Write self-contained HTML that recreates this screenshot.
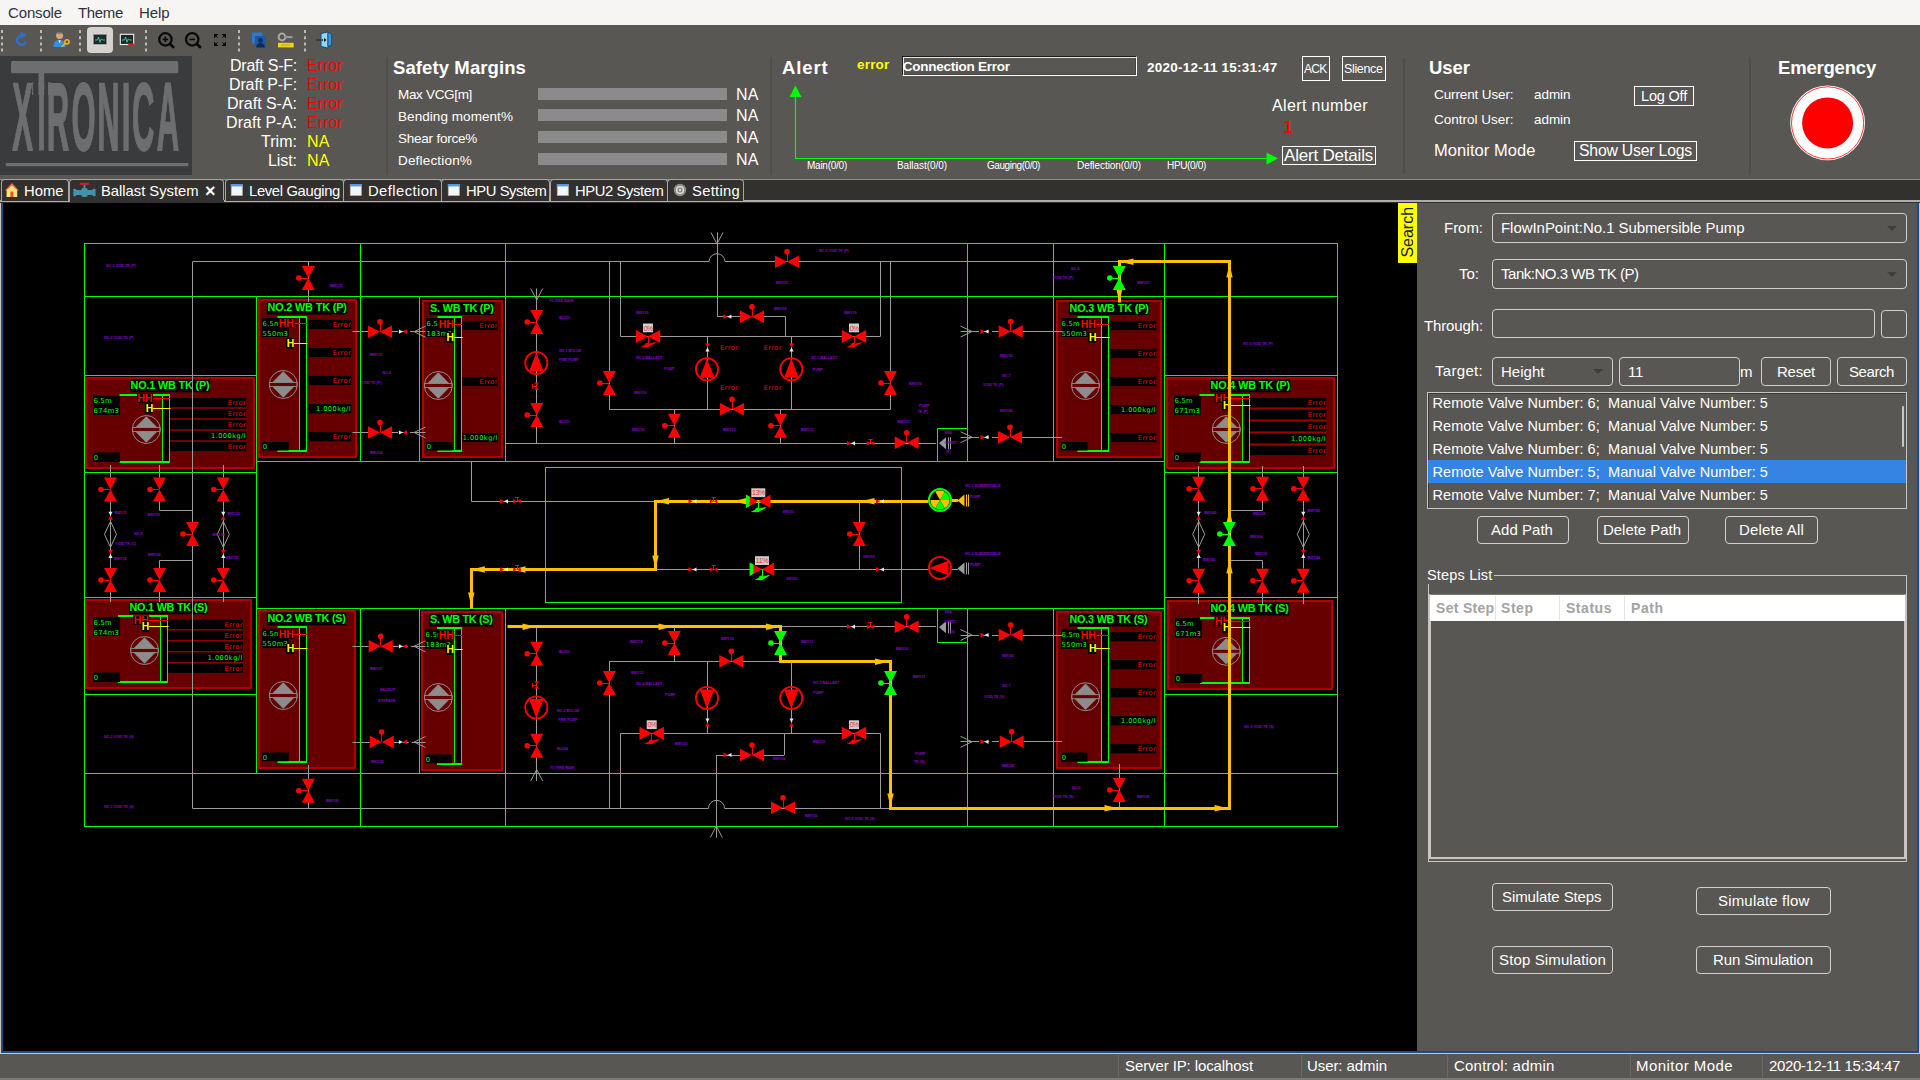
<!DOCTYPE html>
<html lang="en"><head><meta charset="utf-8"><title>Ballast System</title>
<style>
html,body{margin:0;padding:0;background:#595753;}
body{width:1920px;height:1080px;position:relative;overflow:hidden;font-family:"Liberation Sans",sans-serif;}
.t{position:absolute;white-space:pre;margin:0;padding:0;}
.b{position:absolute;box-sizing:border-box;}
svg{position:absolute;left:0;top:0;}
svg text{font-family:"Liberation Sans",sans-serif;white-space:pre;}
svg text.dv{font-family:"DejaVu Sans","Liberation Sans",sans-serif;}
</style></head>
<body>
<div class="b" style="left:0px;top:0px;width:1920px;height:25px;background:#f6f5f4;"></div>
<span class="t" style="left:8.00px;top:3.50px;font-size:15px;line-height:18px;font-weight:400;color:#2e3436;letter-spacing:-0.148px;">Console</span>
<span class="t" style="left:78.00px;top:3.50px;font-size:15px;line-height:18px;font-weight:400;color:#2e3436;letter-spacing:-0.337px;">Theme</span>
<span class="t" style="left:139.00px;top:3.50px;font-size:15px;line-height:18px;font-weight:400;color:#2e3436;letter-spacing:-0.088px;">Help</span>
<div class="b" style="left:0px;top:56px;width:192px;height:119px;background:#3a3b3d;"></div>
<span class="t" style="left:230.00px;top:55.50px;font-size:16px;line-height:19px;font-weight:400;color:#fff;letter-spacing:-0.234px;">Draft S-F:</span>
<span class="t" style="left:307.00px;top:55.50px;font-size:16px;line-height:19px;font-weight:400;color:#ff0000;letter-spacing:0.089px;">Error</span>
<span class="t" style="left:229.00px;top:74.50px;font-size:16px;line-height:19px;font-weight:400;color:#fff;letter-spacing:-0.134px;">Draft P-F:</span>
<span class="t" style="left:307.00px;top:74.50px;font-size:16px;line-height:19px;font-weight:400;color:#ff0000;letter-spacing:0.089px;">Error</span>
<span class="t" style="left:227.00px;top:93.50px;font-size:16px;line-height:19px;font-weight:400;color:#fff;letter-spacing:-0.024px;">Draft S-A:</span>
<span class="t" style="left:307.00px;top:93.50px;font-size:16px;line-height:19px;font-weight:400;color:#ff0000;letter-spacing:0.089px;">Error</span>
<span class="t" style="left:226.00px;top:112.50px;font-size:16px;line-height:19px;font-weight:400;color:#fff;letter-spacing:0.076px;">Draft P-A:</span>
<span class="t" style="left:307.00px;top:112.50px;font-size:16px;line-height:19px;font-weight:400;color:#ff0000;letter-spacing:0.089px;">Error</span>
<span class="t" style="left:261.00px;top:131.50px;font-size:16px;line-height:19px;font-weight:400;color:#fff;letter-spacing:0.033px;">Trim:</span>
<span class="t" style="left:307.00px;top:131.50px;font-size:16px;line-height:19px;font-weight:400;color:#ffff00;letter-spacing:0.136px;">NA</span>
<span class="t" style="left:268.00px;top:150.50px;font-size:16px;line-height:19px;font-weight:400;color:#fff;letter-spacing:-0.069px;">List:</span>
<span class="t" style="left:307.00px;top:150.50px;font-size:16px;line-height:19px;font-weight:400;color:#ffff00;letter-spacing:0.136px;">NA</span>
<div class="b" style="left:386px;top:57px;width:2px;height:118px;background:#504e4a;"></div>
<div class="b" style="left:770px;top:57px;width:2px;height:118px;background:#504e4a;"></div>
<div class="b" style="left:1403px;top:57px;width:2px;height:118px;background:#504e4a;"></div>
<div class="b" style="left:1749px;top:57px;width:2px;height:118px;background:#504e4a;"></div>
<span class="t" style="left:393.00px;top:57.00px;font-size:18.5px;line-height:22px;font-weight:700;color:#fff;letter-spacing:0.100px;">Safety Margins</span>
<span class="t" style="left:398.00px;top:87.30px;font-size:13.5px;line-height:16px;font-weight:400;color:#fff;letter-spacing:-0.326px;">Max VCG[m]</span>
<div class="b" style="left:538px;top:87.5px;width:189px;height:12px;background:#8b8b8b;"></div>
<span class="t" style="left:736.00px;top:84.50px;font-size:16px;line-height:19px;font-weight:400;color:#fff;letter-spacing:0.136px;">NA</span>
<span class="t" style="left:398.00px;top:108.80px;font-size:13.5px;line-height:16px;font-weight:400;color:#fff;letter-spacing:0.062px;">Bending moment%</span>
<div class="b" style="left:538px;top:109px;width:189px;height:12px;background:#8b8b8b;"></div>
<span class="t" style="left:736.00px;top:106.00px;font-size:16px;line-height:19px;font-weight:400;color:#fff;letter-spacing:0.136px;">NA</span>
<span class="t" style="left:398.00px;top:130.80px;font-size:13.5px;line-height:16px;font-weight:400;color:#fff;letter-spacing:-0.233px;">Shear force%</span>
<div class="b" style="left:538px;top:131px;width:189px;height:12px;background:#8b8b8b;"></div>
<span class="t" style="left:736.00px;top:128.00px;font-size:16px;line-height:19px;font-weight:400;color:#fff;letter-spacing:0.136px;">NA</span>
<span class="t" style="left:398.00px;top:152.80px;font-size:13.5px;line-height:16px;font-weight:400;color:#fff;letter-spacing:0.179px;">Deflection%</span>
<div class="b" style="left:538px;top:153px;width:189px;height:12px;background:#8b8b8b;"></div>
<span class="t" style="left:736.00px;top:150.00px;font-size:16px;line-height:19px;font-weight:400;color:#fff;letter-spacing:0.136px;">NA</span>
<span class="t" style="left:782.00px;top:57.00px;font-size:18.5px;line-height:22px;font-weight:700;color:#fff;letter-spacing:0.870px;">Alert</span>
<span class="t" style="left:857.00px;top:57.00px;font-size:13.5px;line-height:16px;font-weight:700;color:#ffff00;letter-spacing:0.197px;">error</span>
<div class="b" style="left:902px;top:56px;width:235px;height:20px;border:1px solid;border-color:#1c1c1c #fff #fff #1c1c1c;box-shadow:inset 1px 1px 0 #e8e8e8, inset -1px -1px 0 #444;"></div>
<span class="t" style="left:902.70px;top:59.00px;font-size:13.5px;line-height:16px;font-weight:700;color:#fff;letter-spacing:-0.238px;">Connection Error</span>
<span class="t" style="left:1147.00px;top:60.00px;font-size:13.5px;line-height:16px;font-weight:700;color:#fff;letter-spacing:0.231px;">2020-12-11 15:31:47</span>
<span class="t" style="left:807.00px;top:159.50px;font-size:10px;line-height:12px;font-weight:400;color:#fff;letter-spacing:-0.249px;">Main(0/0)</span>
<span class="t" style="left:897.00px;top:159.50px;font-size:10px;line-height:12px;font-weight:400;color:#fff;letter-spacing:-0.048px;">Ballast(0/0)</span>
<span class="t" style="left:987.00px;top:159.50px;font-size:10px;line-height:12px;font-weight:400;color:#fff;letter-spacing:-0.448px;">Gauging(0/0)</span>
<span class="t" style="left:1077.00px;top:159.50px;font-size:10px;line-height:12px;font-weight:400;color:#fff;letter-spacing:-0.069px;">Deflection(0/0)</span>
<span class="t" style="left:1167.00px;top:159.50px;font-size:10px;line-height:12px;font-weight:400;color:#fff;letter-spacing:-0.335px;">HPU(0/0)</span>
<div class="b" style="left:1302px;top:56px;width:28px;height:25px;border:1px solid #fff;"></div>
<span class="t" style="left:1304.00px;top:61.50px;font-size:12px;line-height:14px;font-weight:400;color:#fff;letter-spacing:-0.725px;">ACK</span>
<div class="b" style="left:1342px;top:56px;width:44px;height:25px;border:1px solid #fff;"></div>
<span class="t" style="left:1344.00px;top:61.70px;font-size:12.5px;line-height:15px;font-weight:400;color:#fff;letter-spacing:-0.357px;">Slience</span>
<span class="t" style="left:1272.00px;top:95.50px;font-size:16px;line-height:19px;font-weight:400;color:#fff;letter-spacing:0.367px;">Alert number</span>
<span class="t" style="left:1283.50px;top:117.50px;font-size:16px;line-height:19px;font-weight:700;color:#ff0000;letter-spacing:-1.899px;">1</span>
<div class="b" style="left:1282px;top:146px;width:94px;height:19px;border:1px solid #fff;"></div>
<span class="t" style="left:1284.00px;top:145.70px;font-size:17px;line-height:20px;font-weight:400;color:#fff;letter-spacing:-0.203px;">Alert Details</span>
<span class="t" style="left:1429.00px;top:57.00px;font-size:18.5px;line-height:22px;font-weight:700;color:#fff;letter-spacing:-0.034px;">User</span>
<span class="t" style="left:1434.00px;top:86.50px;font-size:13.5px;line-height:16px;font-weight:400;color:#fff;letter-spacing:-0.117px;">Current User:</span>
<span class="t" style="left:1534.00px;top:86.50px;font-size:13.5px;line-height:16px;font-weight:400;color:#fff;letter-spacing:-0.054px;">admin</span>
<span class="t" style="left:1434.00px;top:111.50px;font-size:13.5px;line-height:16px;font-weight:400;color:#fff;letter-spacing:-0.002px;">Control User:</span>
<span class="t" style="left:1534.00px;top:111.50px;font-size:13.5px;line-height:16px;font-weight:400;color:#fff;letter-spacing:-0.054px;">admin</span>
<span class="t" style="left:1434.00px;top:140.00px;font-size:16.5px;line-height:20px;font-weight:400;color:#fff;letter-spacing:0.052px;">Monitor Mode</span>
<div class="b" style="left:1634px;top:86px;width:60px;height:20px;border:1px solid #fff;"></div>
<span class="t" style="left:1641.00px;top:88.00px;font-size:14.5px;line-height:17px;font-weight:400;color:#fff;letter-spacing:-0.185px;">Log Off</span>
<div class="b" style="left:1574px;top:141px;width:123px;height:20px;border:1px solid #fff;"></div>
<span class="t" style="left:1579.00px;top:141.00px;font-size:15.8px;line-height:19px;font-weight:400;color:#fff;letter-spacing:-0.209px;">Show User Logs</span>
<span class="t" style="left:1778.00px;top:57.00px;font-size:18.5px;line-height:22px;font-weight:700;color:#fff;letter-spacing:-0.194px;">Emergency</span>
<div class="b" style="left:0px;top:179px;width:1920px;height:24px;background:#33312f;border-top:1px solid #8f8c88;"></div>
<div class="b" style="left:0px;top:200px;width:1920px;height:1.5px;background:#b0ada8;"></div>
<div class="b" style="left:1px;top:179px;width:68px;height:22px;border:1px solid #a9a6a1;border-bottom:none;border-radius:4px 4px 0 0;background:#33312f;"></div>
<span class="t" style="left:24.00px;top:182.20px;font-size:14.8px;line-height:18px;font-weight:400;color:#fff;letter-spacing:0.005px;">Home</span>
<div class="b" style="left:68.5px;top:179px;width:155.5px;height:22px;border:1px solid #a9a6a1;border-bottom:none;border-radius:4px 4px 0 0;background:#33312f;"></div>
<span class="t" style="left:101.00px;top:182.20px;font-size:14.8px;line-height:18px;font-weight:400;color:#fff;letter-spacing:-0.027px;">Ballast System</span>
<div class="b" style="left:224.5px;top:179px;width:119.2px;height:22px;border:1px solid #a9a6a1;border-bottom:none;border-radius:4px 4px 0 0;background:#33312f;"></div>
<span class="t" style="left:249.00px;top:182.20px;font-size:14.8px;line-height:18px;font-weight:400;color:#fff;letter-spacing:-0.342px;">Level Gauging</span>
<div class="b" style="left:342.7px;top:179px;width:99px;height:22px;border:1px solid #a9a6a1;border-bottom:none;border-radius:4px 4px 0 0;background:#33312f;"></div>
<span class="t" style="left:368.00px;top:182.20px;font-size:14.8px;line-height:18px;font-weight:400;color:#fff;letter-spacing:0.419px;">Deflection</span>
<div class="b" style="left:440.7px;top:179px;width:109.8px;height:22px;border:1px solid #a9a6a1;border-bottom:none;border-radius:4px 4px 0 0;background:#33312f;"></div>
<span class="t" style="left:466.00px;top:182.20px;font-size:14.8px;line-height:18px;font-weight:400;color:#fff;letter-spacing:-0.420px;">HPU System</span>
<div class="b" style="left:549.5px;top:179px;width:118px;height:22px;border:1px solid #a9a6a1;border-bottom:none;border-radius:4px 4px 0 0;background:#33312f;"></div>
<span class="t" style="left:575.00px;top:182.20px;font-size:14.8px;line-height:18px;font-weight:400;color:#fff;letter-spacing:-0.403px;">HPU2 System</span>
<div class="b" style="left:666.5px;top:179px;width:77.5px;height:22px;border:1px solid #a9a6a1;border-bottom:none;border-radius:4px 4px 0 0;background:#33312f;"></div>
<span class="t" style="left:692.00px;top:182.20px;font-size:14.8px;line-height:18px;font-weight:400;color:#fff;letter-spacing:0.275px;">Setting</span>
<div class="b" style="left:69.5px;top:200px;width:154px;height:1.5px;background:#33312f;"></div>
<span class="t" style="left:205.00px;top:179.50px;font-size:18px;line-height:22px;font-weight:700;color:#fff;letter-spacing:0.000px;">×</span>
<div class="b" style="left:0px;top:203px;width:1920px;height:851px;background:#cdc7bd;"></div>
<div class="b" style="left:1px;top:203px;width:1918px;height:850px;background:#1d4b8f;"></div>
<div class="b" style="left:1417px;top:203px;width:500px;height:848px;background:#595753;"></div>
<span class="t" style="left:1444.00px;top:219.00px;font-size:15px;line-height:18px;font-weight:400;color:#fff;letter-spacing:-0.033px;">From:</span>
<div class="b" style="left:1492px;top:213px;width:415px;height:30px;border:1px solid #d2d0cb;border-radius:4px;"></div>
<div class="b" style="left:1886.7px;top:225.8px;width:0;height:0;border-left:5.6px solid transparent;border-right:5.6px solid transparent;border-top:5.4px solid #403e3b;"></div>
<span class="t" style="left:1501.00px;top:219.00px;font-size:15px;line-height:18px;font-weight:400;color:#fff;letter-spacing:-0.049px;">FlowInPoint:No.1 Submersible Pump</span>
<span class="t" style="left:1459.00px;top:265.00px;font-size:15px;line-height:18px;font-weight:400;color:#fff;letter-spacing:-0.003px;">To:</span>
<div class="b" style="left:1492px;top:259px;width:415px;height:30px;border:1px solid #d2d0cb;border-radius:4px;"></div>
<div class="b" style="left:1886.7px;top:271.8px;width:0;height:0;border-left:5.6px solid transparent;border-right:5.6px solid transparent;border-top:5.4px solid #403e3b;"></div>
<span class="t" style="left:1501.00px;top:265.00px;font-size:15px;line-height:18px;font-weight:400;color:#fff;letter-spacing:-0.470px;">Tank:NO.3 WB TK (P)</span>
<span class="t" style="left:1424.00px;top:317.00px;font-size:15px;line-height:18px;font-weight:400;color:#fff;letter-spacing:-0.130px;">Through:</span>
<div class="b" style="left:1492px;top:309px;width:383px;height:29px;border:1px solid #d2d0cb;border-radius:4px;"></div>
<div class="b" style="left:1881px;top:310px;width:26px;height:28px;border:1px solid #d2d0cb;border-radius:4px;"></div>
<span class="t" style="left:1435.00px;top:362.00px;font-size:15px;line-height:18px;font-weight:400;color:#fff;letter-spacing:0.306px;">Target:</span>
<div class="b" style="left:1492px;top:357px;width:121px;height:29px;border:1px solid #d2d0cb;border-radius:4px;"></div>
<div class="b" style="left:1592.7px;top:369.3px;width:0;height:0;border-left:5.6px solid transparent;border-right:5.6px solid transparent;border-top:5.4px solid #403e3b;"></div>
<span class="t" style="left:1501.00px;top:363.00px;font-size:15px;line-height:18px;font-weight:400;color:#fff;letter-spacing:0.023px;">Height</span>
<div class="b" style="left:1619px;top:357px;width:121px;height:29px;border:1px solid #d2d0cb;border-radius:4px;"></div>
<span class="t" style="left:1628.00px;top:362.50px;font-size:15px;line-height:18px;font-weight:400;color:#fff;letter-spacing:-0.286px;">11</span>
<span class="t" style="left:1740.00px;top:362.50px;font-size:15px;line-height:18px;font-weight:400;color:#fff;letter-spacing:-0.996px;">m</span>
<div class="b" style="left:1761px;top:357px;width:70px;height:29px;border:1px solid #d2d0cb;border-radius:4px;"></div>
<span class="t" style="left:1777.00px;top:362.50px;font-size:15px;line-height:18px;font-weight:400;color:#fff;letter-spacing:-0.237px;">Reset</span>
<div class="b" style="left:1837px;top:357px;width:70px;height:29px;border:1px solid #d2d0cb;border-radius:4px;"></div>
<span class="t" style="left:1849.00px;top:362.50px;font-size:15px;line-height:18px;font-weight:400;color:#fff;letter-spacing:-0.421px;">Search</span>
<div class="b" style="left:1427px;top:392px;width:480px;height:117px;border:1px solid #c9c6c1;box-shadow:inset 1px 1px 0 #3c3a37;"></div>
<div class="b" style="left:1428px;top:460px;width:478px;height:23px;background:#3584e4;"></div>
<span class="t" style="left:1432.50px;top:394.50px;font-size:14.5px;line-height:17px;font-weight:400;color:#fff;letter-spacing:0.068px;">Remote Valve Number: 6;  Manual Valve Number: 5</span>
<span class="t" style="left:1432.50px;top:417.50px;font-size:14.5px;line-height:17px;font-weight:400;color:#fff;letter-spacing:0.068px;">Remote Valve Number: 6;  Manual Valve Number: 5</span>
<span class="t" style="left:1432.50px;top:440.50px;font-size:14.5px;line-height:17px;font-weight:400;color:#fff;letter-spacing:0.068px;">Remote Valve Number: 6;  Manual Valve Number: 5</span>
<span class="t" style="left:1432.50px;top:463.50px;font-size:14.5px;line-height:17px;font-weight:400;color:#fff;letter-spacing:0.068px;">Remote Valve Number: 5;  Manual Valve Number: 5</span>
<span class="t" style="left:1432.50px;top:486.50px;font-size:14.5px;line-height:17px;font-weight:400;color:#fff;letter-spacing:0.068px;">Remote Valve Number: 7;  Manual Valve Number: 5</span>
<div class="b" style="left:1902px;top:406px;width:2px;height:41px;background:#c8c6c2;border-radius:1px;"></div>
<div class="b" style="left:1476.5px;top:515.5px;width:92px;height:28.5px;border:1px solid #d2d0cb;border-radius:4px;"></div>
<span class="t" style="left:1491.00px;top:521.00px;font-size:15px;line-height:18px;font-weight:400;color:#fff;letter-spacing:0.036px;">Add Path</span>
<div class="b" style="left:1596.5px;top:515.5px;width:92px;height:28.5px;border:1px solid #d2d0cb;border-radius:4px;"></div>
<span class="t" style="left:1603.00px;top:521.00px;font-size:15px;line-height:18px;font-weight:400;color:#fff;letter-spacing:-0.035px;">Delete Path</span>
<div class="b" style="left:1725px;top:515.5px;width:92.5px;height:28.5px;border:1px solid #d2d0cb;border-radius:4px;"></div>
<span class="t" style="left:1739.00px;top:521.00px;font-size:15px;line-height:18px;font-weight:400;color:#fff;letter-spacing:0.163px;">Delete All</span>
<div class="b" style="left:1427.5px;top:575px;width:479px;height:287px;border:1px solid #c9c6c1;"></div>
<div class="b" style="left:1426px;top:566px;width:67.5px;height:18px;background:#595753;"></div>
<span class="t" style="left:1427.00px;top:566.50px;font-size:14.5px;line-height:17px;font-weight:400;color:#fff;letter-spacing:0.183px;">Steps List</span>
<div class="b" style="left:1429px;top:594px;width:476.5px;height:265px;border:2px solid #c9c6c1;border-top:1px solid #777;"></div>
<div class="b" style="left:1430px;top:595px;width:474.5px;height:26px;background:#fff;"></div>
<div class="b" style="left:1495px;top:596px;width:1px;height:24px;background:#e4e4e4;"></div>
<div class="b" style="left:1559px;top:596px;width:1px;height:24px;background:#e4e4e4;"></div>
<div class="b" style="left:1624px;top:596px;width:1px;height:24px;background:#e4e4e4;"></div>
<span class="t" style="left:1436px;top:599.5px;width:59px;overflow:hidden;font-size:14px;line-height:17px;font-weight:700;color:#a3a3a3;letter-spacing:0.3px;">Set Step</span>
<span class="t" style="left:1501.00px;top:599.50px;font-size:14px;line-height:17px;font-weight:700;color:#a3a3a3;letter-spacing:0.540px;">Step</span>
<span class="t" style="left:1566.00px;top:599.50px;font-size:14px;line-height:17px;font-weight:700;color:#a3a3a3;letter-spacing:0.535px;">Status</span>
<span class="t" style="left:1631.00px;top:599.50px;font-size:14px;line-height:17px;font-weight:700;color:#a3a3a3;letter-spacing:0.540px;">Path</span>
<div class="b" style="left:1492px;top:882.5px;width:121px;height:28px;border:1px solid #d2d0cb;border-radius:4px;"></div>
<span class="t" style="left:1502.00px;top:888.00px;font-size:15px;line-height:18px;font-weight:400;color:#fff;letter-spacing:-0.099px;">Simulate Steps</span>
<div class="b" style="left:1696px;top:886.5px;width:134.5px;height:28px;border:1px solid #d2d0cb;border-radius:4px;"></div>
<span class="t" style="left:1718.00px;top:892.00px;font-size:15px;line-height:18px;font-weight:400;color:#fff;letter-spacing:0.177px;">Simulate flow</span>
<div class="b" style="left:1492px;top:945.5px;width:121px;height:28px;border:1px solid #d2d0cb;border-radius:4px;"></div>
<span class="t" style="left:1499.00px;top:951.00px;font-size:15px;line-height:18px;font-weight:400;color:#fff;letter-spacing:0.129px;">Stop Simulation</span>
<div class="b" style="left:1696px;top:945.5px;width:134.5px;height:28px;border:1px solid #d2d0cb;border-radius:4px;"></div>
<span class="t" style="left:1713.00px;top:951.00px;font-size:15px;line-height:18px;font-weight:400;color:#fff;letter-spacing:-0.123px;">Run Simulation</span>
<div class="b" style="left:0px;top:1054px;width:1920px;height:26px;background:#595753;border-bottom:2px solid #7b7a76;"></div>
<div class="b" style="left:1118px;top:1055px;width:1px;height:23px;background:#6b6965;"></div>
<div class="b" style="left:1301px;top:1055px;width:1px;height:23px;background:#6b6965;"></div>
<div class="b" style="left:1447px;top:1055px;width:1px;height:23px;background:#6b6965;"></div>
<div class="b" style="left:1630px;top:1055px;width:1px;height:23px;background:#6b6965;"></div>
<div class="b" style="left:1762px;top:1055px;width:1px;height:23px;background:#6b6965;"></div>
<span class="t" style="left:1125.00px;top:1056.50px;font-size:15px;line-height:18px;font-weight:400;color:#fff;letter-spacing:-0.103px;">Server IP: localhost</span>
<span class="t" style="left:1307.00px;top:1056.50px;font-size:15px;line-height:18px;font-weight:400;color:#fff;letter-spacing:-0.078px;">User: admin</span>
<span class="t" style="left:1454.00px;top:1056.50px;font-size:15px;line-height:18px;font-weight:400;color:#fff;letter-spacing:0.211px;">Control: admin</span>
<span class="t" style="left:1636.00px;top:1056.50px;font-size:15px;line-height:18px;font-weight:400;color:#fff;letter-spacing:0.441px;">Monitor Mode</span>
<span class="t" style="left:1769.00px;top:1056.50px;font-size:15px;line-height:18px;font-weight:400;color:#fff;letter-spacing:-0.378px;">2020-12-11 15:34:47</span>
<svg width="1920" height="1080" viewBox="0 0 1920 1080">
<rect x="3" y="203" width="1414" height="848" fill="#000"/>
<rect x="84.50" y="243.50" width="1253.00" height="583.00" fill="none" stroke="#00ff00" stroke-width="1"/>
<line x1="84.50" y1="296.50" x2="1337.50" y2="296.50" stroke="#00ff00" stroke-width="1" />
<line x1="84.50" y1="773.50" x2="1337.50" y2="773.50" stroke="#00ff00" stroke-width="1" />
<line x1="84.50" y1="375.50" x2="256.50" y2="375.50" stroke="#00ff00" stroke-width="1" />
<line x1="84.50" y1="472.50" x2="256.50" y2="472.50" stroke="#00ff00" stroke-width="1" />
<line x1="84.50" y1="597.50" x2="256.50" y2="597.50" stroke="#00ff00" stroke-width="1" />
<line x1="84.50" y1="694.50" x2="256.50" y2="694.50" stroke="#00ff00" stroke-width="1" />
<line x1="1164.50" y1="375.50" x2="1337.50" y2="375.50" stroke="#00ff00" stroke-width="1" />
<line x1="1164.50" y1="472.50" x2="1337.50" y2="472.50" stroke="#00ff00" stroke-width="1" />
<line x1="1164.50" y1="597.50" x2="1337.50" y2="597.50" stroke="#00ff00" stroke-width="1" />
<line x1="1164.50" y1="694.50" x2="1337.50" y2="694.50" stroke="#00ff00" stroke-width="1" />
<line x1="256.50" y1="461.50" x2="1164.50" y2="461.50" stroke="#00ff00" stroke-width="1" />
<line x1="256.50" y1="608.50" x2="1164.50" y2="608.50" stroke="#00ff00" stroke-width="1" />
<line x1="256.50" y1="296.50" x2="256.50" y2="773.50" stroke="#00ff00" stroke-width="1" />
<line x1="1164.50" y1="243.50" x2="1164.50" y2="826.50" stroke="#00ff00" stroke-width="1" />
<line x1="360.50" y1="243.50" x2="360.50" y2="461.50" stroke="#00ff00" stroke-width="1" />
<line x1="360.50" y1="608.50" x2="360.50" y2="826.50" stroke="#00ff00" stroke-width="1" />
<line x1="505.50" y1="243.50" x2="505.50" y2="461.50" stroke="#00ff00" stroke-width="1" />
<line x1="505.50" y1="608.50" x2="505.50" y2="826.50" stroke="#00ff00" stroke-width="1" />
<line x1="967.50" y1="243.50" x2="967.50" y2="461.50" stroke="#00ff00" stroke-width="1" />
<line x1="967.50" y1="608.50" x2="967.50" y2="826.50" stroke="#00ff00" stroke-width="1" />
<line x1="1053.50" y1="243.50" x2="1053.50" y2="461.50" stroke="#00ff00" stroke-width="1" />
<line x1="1053.50" y1="608.50" x2="1053.50" y2="826.50" stroke="#00ff00" stroke-width="1" />
<line x1="419.50" y1="296.50" x2="419.50" y2="461.50" stroke="#00ff00" stroke-width="1" />
<line x1="419.50" y1="608.50" x2="419.50" y2="773.50" stroke="#00ff00" stroke-width="1" />
<rect x="545.50" y="467.50" width="356.00" height="135.00" fill="none" stroke="#00ff00" stroke-width="1"/>
<polyline points="967.50,428.50 937.50,428.50 937.50,461.50" stroke="#00ff00" stroke-width="1" fill="none" />
<polyline points="937.50,608.50 937.50,642.50 967.50,642.50" stroke="#00ff00" stroke-width="1" fill="none" />
<rect x="86.00" y="378.00" width="168.00" height="90.00" fill="#660000" stroke="#b00000" stroke-width="2"/>
<rect x="129.90" y="379.30" width="80.20" height="13.00" fill="#000" stroke="none" stroke-width="1"/>
<text x="130.50" y="389.19" font-size="10.8" font-weight="700" fill="#00ff00" letter-spacing="-0.143" >NO.1 WB TK (P)</text>
<line x1="170.00" y1="408.00" x2="246.30" y2="408.00" stroke="#c00000" stroke-width="0.6" />
<line x1="170.00" y1="419.00" x2="246.30" y2="419.00" stroke="#c00000" stroke-width="0.6" />
<line x1="170.00" y1="430.00" x2="246.30" y2="430.00" stroke="#c00000" stroke-width="0.6" />
<line x1="170.00" y1="441.00" x2="246.30" y2="441.00" stroke="#c00000" stroke-width="0.6" />
<rect x="170.00" y="397.90" width="76.30" height="9.20" fill="#000" stroke="none" stroke-width="1"/>
<text x="227.80" y="405.08" font-size="6.6" font-weight="400" fill="#ff0000" letter-spacing="0.442"  class="dv">Error</text>
<rect x="170.00" y="408.90" width="76.30" height="9.20" fill="#000" stroke="none" stroke-width="1"/>
<text x="227.80" y="416.08" font-size="6.6" font-weight="400" fill="#ff0000" letter-spacing="0.442"  class="dv">Error</text>
<rect x="170.00" y="419.90" width="76.30" height="9.20" fill="#000" stroke="none" stroke-width="1"/>
<text x="227.80" y="427.08" font-size="6.6" font-weight="400" fill="#ff0000" letter-spacing="0.442"  class="dv">Error</text>
<rect x="170.00" y="430.90" width="76.30" height="9.20" fill="#000" stroke="none" stroke-width="1"/>
<text x="211.00" y="438.08" font-size="6.6" font-weight="400" fill="#00ff00" letter-spacing="0.460"  class="dv">1.000kg/l</text>
<rect x="170.00" y="441.90" width="76.30" height="9.20" fill="#000" stroke="none" stroke-width="1"/>
<text x="227.80" y="449.08" font-size="6.6" font-weight="400" fill="#ff0000" letter-spacing="0.442"  class="dv">Error</text>
<rect x="93.00" y="395.70" width="27.00" height="19.30" fill="#000" stroke="none" stroke-width="1"/>
<rect x="162.50" y="395.50" width="7.00" height="66.50" fill="#000" stroke="none" stroke-width="1"/>
<rect x="119.50" y="394.00" width="50.50" height="2.00" fill="#00ff00" stroke="none" stroke-width="1"/>
<rect x="119.50" y="461.00" width="50.50" height="2.00" fill="#00ff00" stroke="none" stroke-width="1"/>
<line x1="162.50" y1="395.50" x2="162.50" y2="462.00" stroke="#00ff00" stroke-width="1" />
<line x1="169.50" y1="395.50" x2="169.50" y2="462.00" stroke="#00ff00" stroke-width="1" />
<text x="93.60" y="403.35" font-size="6.8" font-weight="400" fill="#00ff00" letter-spacing="0.240"  class="dv">6.5m</text>
<text x="93.60" y="413.35" font-size="6.8" font-weight="400" fill="#00ff00" letter-spacing="0.354"  class="dv">674m3</text>
<rect x="93.00" y="452.50" width="27.00" height="9.50" fill="#000" stroke="none" stroke-width="1"/>
<text x="93.80" y="460.00" font-size="6.8" font-weight="400" fill="#00ff00" letter-spacing="0.000"  class="dv">0</text>
<rect x="137.00" y="393.60" width="16.00" height="9.40" fill="#000" stroke="none" stroke-width="1"/>
<text x="137.50" y="402.04" font-size="10.4" font-weight="700" fill="#ff0000" letter-spacing="-0.011" >HH</text>
<line x1="153.00" y1="398.50" x2="170.00" y2="398.50" stroke="#ff0000" stroke-width="1" />
<rect x="144.90" y="403.10" width="8.20" height="10.40" fill="#000" stroke="none" stroke-width="1"/>
<text x="145.70" y="412.04" font-size="10.4" font-weight="700" fill="#ffff00" letter-spacing="-0.911" >H</text>
<line x1="152.80" y1="408.50" x2="170.50" y2="408.50" stroke="#ffff00" stroke-width="1" />
<circle cx="146.30" cy="429.50" r="14.00" fill="none" stroke="#8c8c8c" stroke-width="1"/>
<polygon points="133.30,429.50 146.30,416.30 159.30,429.50 146.30,442.70" fill="#8c8c8c" />
<rect x="132.70" y="427.50" width="27.20" height="4.00" fill="#660000" stroke="#8c8c8c" stroke-width="0.9"/>
<rect x="259.00" y="300.00" width="97.00" height="157.00" fill="#660000" stroke="#b00000" stroke-width="2"/>
<rect x="266.90" y="301.50" width="80.40" height="13.00" fill="#000" stroke="none" stroke-width="1"/>
<text x="267.50" y="311.39" font-size="10.8" font-weight="700" fill="#00ff00" letter-spacing="-0.128" >NO.2 WB TK (P)</text>
<rect x="307.00" y="319.90" width="44.30" height="9.20" fill="#000" stroke="none" stroke-width="1"/>
<text x="332.80" y="327.08" font-size="6.6" font-weight="400" fill="#ff0000" letter-spacing="0.442"  class="dv">Error</text>
<rect x="307.00" y="347.90" width="44.30" height="9.20" fill="#000" stroke="none" stroke-width="1"/>
<text x="332.80" y="355.08" font-size="6.6" font-weight="400" fill="#ff0000" letter-spacing="0.442"  class="dv">Error</text>
<rect x="307.00" y="375.90" width="44.30" height="9.20" fill="#000" stroke="none" stroke-width="1"/>
<text x="332.80" y="383.08" font-size="6.6" font-weight="400" fill="#ff0000" letter-spacing="0.442"  class="dv">Error</text>
<rect x="307.00" y="404.10" width="44.30" height="9.20" fill="#000" stroke="none" stroke-width="1"/>
<text x="316.00" y="411.28" font-size="6.6" font-weight="400" fill="#00ff00" letter-spacing="0.460"  class="dv">1.000kg/l</text>
<rect x="307.00" y="432.10" width="44.30" height="9.20" fill="#000" stroke="none" stroke-width="1"/>
<text x="332.80" y="439.28" font-size="6.6" font-weight="400" fill="#ff0000" letter-spacing="0.442"  class="dv">Error</text>
<rect x="262.00" y="318.00" width="26.70" height="19.00" fill="#000" stroke="none" stroke-width="1"/>
<rect x="299.50" y="317.30" width="7.00" height="134.00" fill="#000" stroke="none" stroke-width="1"/>
<rect x="277.50" y="316.00" width="29.50" height="2.00" fill="#00ff00" stroke="none" stroke-width="1"/>
<rect x="277.50" y="450.00" width="29.50" height="2.00" fill="#00ff00" stroke="none" stroke-width="1"/>
<line x1="299.50" y1="317.30" x2="299.50" y2="451.30" stroke="#00ff00" stroke-width="1" />
<line x1="306.50" y1="317.30" x2="306.50" y2="451.30" stroke="#00ff00" stroke-width="1" />
<text x="262.60" y="325.65" font-size="6.8" font-weight="400" fill="#00ff00" letter-spacing="0.240"  class="dv">6.5m</text>
<text x="262.60" y="335.65" font-size="6.8" font-weight="400" fill="#00ff00" letter-spacing="0.354"  class="dv">550m3</text>
<rect x="262.00" y="442.00" width="26.70" height="8.50" fill="#000" stroke="none" stroke-width="1"/>
<text x="262.80" y="449.00" font-size="6.8" font-weight="400" fill="#00ff00" letter-spacing="0.000"  class="dv">0</text>
<rect x="278.20" y="318.60" width="16.00" height="9.40" fill="#000" stroke="none" stroke-width="1"/>
<text x="278.70" y="327.04" font-size="10.4" font-weight="700" fill="#ff0000" letter-spacing="-0.011" >HH</text>
<line x1="294.20" y1="323.50" x2="307.00" y2="323.50" stroke="#ff0000" stroke-width="1" />
<rect x="285.90" y="338.10" width="8.10" height="10.40" fill="#000" stroke="none" stroke-width="1"/>
<text x="286.70" y="347.04" font-size="10.4" font-weight="700" fill="#ffff00" letter-spacing="-1.011" >H</text>
<line x1="293.70" y1="343.50" x2="307.50" y2="343.50" stroke="#ffff00" stroke-width="1" />
<circle cx="283.30" cy="384.50" r="14.00" fill="none" stroke="#8c8c8c" stroke-width="1"/>
<polygon points="270.30,384.50 283.30,371.30 296.30,384.50 283.30,397.70" fill="#8c8c8c" />
<rect x="269.70" y="382.50" width="27.20" height="4.00" fill="#660000" stroke="#8c8c8c" stroke-width="0.9"/>
<rect x="423.00" y="301.00" width="79.00" height="156.00" fill="#660000" stroke="#b00000" stroke-width="2"/>
<rect x="429.40" y="302.00" width="64.90" height="13.00" fill="#000" stroke="none" stroke-width="1"/>
<text x="430.00" y="311.89" font-size="10.8" font-weight="700" fill="#00ff00" letter-spacing="-0.191" >S. WB TK (P)</text>
<rect x="462.50" y="320.90" width="35.50" height="9.20" fill="#000" stroke="none" stroke-width="1"/>
<text x="479.50" y="328.08" font-size="6.6" font-weight="400" fill="#ff0000" letter-spacing="0.442"  class="dv">Error</text>
<rect x="462.50" y="376.90" width="35.50" height="9.20" fill="#000" stroke="none" stroke-width="1"/>
<text x="479.50" y="384.08" font-size="6.6" font-weight="400" fill="#ff0000" letter-spacing="0.442"  class="dv">Error</text>
<rect x="462.50" y="432.90" width="35.50" height="9.20" fill="#000" stroke="none" stroke-width="1"/>
<text x="462.70" y="440.08" font-size="6.6" font-weight="400" fill="#00ff00" letter-spacing="0.460"  class="dv">1.000kg/l</text>
<rect x="426.00" y="318.00" width="26.50" height="19.00" fill="#000" stroke="none" stroke-width="1"/>
<rect x="454.50" y="317.70" width="7.20" height="133.60" fill="#000" stroke="none" stroke-width="1"/>
<rect x="437.50" y="316.00" width="24.70" height="2.00" fill="#00ff00" stroke="none" stroke-width="1"/>
<rect x="437.50" y="450.00" width="24.70" height="2.00" fill="#00ff00" stroke="none" stroke-width="1"/>
<line x1="454.50" y1="317.70" x2="454.50" y2="451.30" stroke="#00ff00" stroke-width="1" />
<line x1="461.50" y1="317.70" x2="461.50" y2="451.30" stroke="#00ff00" stroke-width="1" />
<text x="426.60" y="325.65" font-size="6.8" font-weight="400" fill="#00ff00" letter-spacing="0.240"  class="dv">6.5m</text>
<text x="426.60" y="335.65" font-size="6.8" font-weight="400" fill="#00ff00" letter-spacing="0.354"  class="dv">183m3</text>
<rect x="426.00" y="442.00" width="26.50" height="8.50" fill="#000" stroke="none" stroke-width="1"/>
<text x="426.80" y="449.00" font-size="6.8" font-weight="400" fill="#00ff00" letter-spacing="0.000"  class="dv">0</text>
<rect x="438.20" y="319.60" width="16.00" height="9.40" fill="#000" stroke="none" stroke-width="1"/>
<text x="438.70" y="328.04" font-size="10.4" font-weight="700" fill="#ff0000" letter-spacing="-0.011" >HH</text>
<line x1="454.20" y1="324.50" x2="462.20" y2="324.50" stroke="#ff0000" stroke-width="1" />
<rect x="445.70" y="332.30" width="8.10" height="10.40" fill="#000" stroke="none" stroke-width="1"/>
<text x="446.50" y="341.24" font-size="10.4" font-weight="700" fill="#ffff00" letter-spacing="-1.011" >H</text>
<line x1="453.50" y1="337.50" x2="462.70" y2="337.50" stroke="#ffff00" stroke-width="1" />
<circle cx="438.30" cy="385.50" r="14.00" fill="none" stroke="#8c8c8c" stroke-width="1"/>
<polygon points="425.30,385.50 438.30,372.30 451.30,385.50 438.30,398.70" fill="#8c8c8c" />
<rect x="424.70" y="383.50" width="27.20" height="4.00" fill="#660000" stroke="#8c8c8c" stroke-width="0.9"/>
<rect x="1057.00" y="301.00" width="104.00" height="156.00" fill="#660000" stroke="#b00000" stroke-width="2"/>
<rect x="1068.90" y="302.00" width="80.40" height="13.00" fill="#000" stroke="none" stroke-width="1"/>
<text x="1069.50" y="311.89" font-size="10.8" font-weight="700" fill="#00ff00" letter-spacing="-0.128" >NO.3 WB TK (P)</text>
<rect x="1109.30" y="320.90" width="47.00" height="9.20" fill="#000" stroke="none" stroke-width="1"/>
<text x="1137.80" y="328.08" font-size="6.6" font-weight="400" fill="#ff0000" letter-spacing="0.442"  class="dv">Error</text>
<rect x="1109.30" y="348.90" width="47.00" height="9.20" fill="#000" stroke="none" stroke-width="1"/>
<text x="1137.80" y="356.08" font-size="6.6" font-weight="400" fill="#ff0000" letter-spacing="0.442"  class="dv">Error</text>
<rect x="1109.30" y="376.90" width="47.00" height="9.20" fill="#000" stroke="none" stroke-width="1"/>
<text x="1137.80" y="384.08" font-size="6.6" font-weight="400" fill="#ff0000" letter-spacing="0.442"  class="dv">Error</text>
<rect x="1109.30" y="404.90" width="47.00" height="9.20" fill="#000" stroke="none" stroke-width="1"/>
<text x="1121.00" y="412.08" font-size="6.6" font-weight="400" fill="#00ff00" letter-spacing="0.460"  class="dv">1.000kg/l</text>
<rect x="1109.30" y="432.90" width="47.00" height="9.20" fill="#000" stroke="none" stroke-width="1"/>
<text x="1137.80" y="440.08" font-size="6.6" font-weight="400" fill="#ff0000" letter-spacing="0.442"  class="dv">Error</text>
<rect x="1061.00" y="318.00" width="26.50" height="19.00" fill="#000" stroke="none" stroke-width="1"/>
<rect x="1101.50" y="317.70" width="7.20" height="133.60" fill="#000" stroke="none" stroke-width="1"/>
<rect x="1077.50" y="316.00" width="31.70" height="2.00" fill="#00ff00" stroke="none" stroke-width="1"/>
<rect x="1077.50" y="450.00" width="31.70" height="2.00" fill="#00ff00" stroke="none" stroke-width="1"/>
<line x1="1101.50" y1="317.70" x2="1101.50" y2="451.30" stroke="#00ff00" stroke-width="1" />
<line x1="1108.50" y1="317.70" x2="1108.50" y2="451.30" stroke="#00ff00" stroke-width="1" />
<text x="1061.60" y="325.65" font-size="6.8" font-weight="400" fill="#00ff00" letter-spacing="0.240"  class="dv">6.5m</text>
<text x="1061.60" y="335.65" font-size="6.8" font-weight="400" fill="#00ff00" letter-spacing="0.354"  class="dv">550m3</text>
<rect x="1061.00" y="442.00" width="26.50" height="8.50" fill="#000" stroke="none" stroke-width="1"/>
<text x="1061.80" y="449.00" font-size="6.8" font-weight="400" fill="#00ff00" letter-spacing="0.000"  class="dv">0</text>
<rect x="1080.20" y="319.60" width="16.00" height="9.40" fill="#000" stroke="none" stroke-width="1"/>
<text x="1080.70" y="328.04" font-size="10.4" font-weight="700" fill="#ff0000" letter-spacing="-0.011" >HH</text>
<line x1="1096.20" y1="324.50" x2="1109.20" y2="324.50" stroke="#ff0000" stroke-width="1" />
<rect x="1088.10" y="332.30" width="8.10" height="10.40" fill="#000" stroke="none" stroke-width="1"/>
<text x="1088.90" y="341.24" font-size="10.4" font-weight="700" fill="#ffff00" letter-spacing="-1.011" >H</text>
<line x1="1095.90" y1="337.50" x2="1109.70" y2="337.50" stroke="#ffff00" stroke-width="1" />
<circle cx="1085.50" cy="385.50" r="14.00" fill="none" stroke="#8c8c8c" stroke-width="1"/>
<polygon points="1072.50,385.50 1085.50,372.30 1098.50,385.50 1085.50,398.70" fill="#8c8c8c" />
<rect x="1071.90" y="383.50" width="27.20" height="4.00" fill="#660000" stroke="#8c8c8c" stroke-width="0.9"/>
<rect x="1167.00" y="378.00" width="167.00" height="90.00" fill="#660000" stroke="#b00000" stroke-width="2"/>
<rect x="1209.90" y="379.30" width="80.70" height="13.00" fill="#000" stroke="none" stroke-width="1"/>
<text x="1210.50" y="389.19" font-size="10.8" font-weight="700" fill="#00ff00" letter-spacing="-0.107" >NO.4 WB TK (P)</text>
<line x1="1250.00" y1="408.50" x2="1326.30" y2="408.50" stroke="#c00000" stroke-width="0.6" />
<line x1="1250.00" y1="420.50" x2="1326.30" y2="420.50" stroke="#c00000" stroke-width="0.6" />
<line x1="1250.00" y1="432.50" x2="1326.30" y2="432.50" stroke="#c00000" stroke-width="0.6" />
<line x1="1250.00" y1="444.50" x2="1326.30" y2="444.50" stroke="#c00000" stroke-width="0.6" />
<rect x="1250.00" y="397.90" width="76.30" height="9.20" fill="#000" stroke="none" stroke-width="1"/>
<text x="1307.80" y="405.08" font-size="6.6" font-weight="400" fill="#ff0000" letter-spacing="0.442"  class="dv">Error</text>
<rect x="1250.00" y="409.90" width="76.30" height="9.20" fill="#000" stroke="none" stroke-width="1"/>
<text x="1307.80" y="417.08" font-size="6.6" font-weight="400" fill="#ff0000" letter-spacing="0.442"  class="dv">Error</text>
<rect x="1250.00" y="421.90" width="76.30" height="9.20" fill="#000" stroke="none" stroke-width="1"/>
<text x="1307.80" y="429.08" font-size="6.6" font-weight="400" fill="#ff0000" letter-spacing="0.442"  class="dv">Error</text>
<rect x="1250.00" y="433.90" width="76.30" height="9.20" fill="#000" stroke="none" stroke-width="1"/>
<text x="1291.00" y="441.08" font-size="6.6" font-weight="400" fill="#00ff00" letter-spacing="0.460"  class="dv">1.000kg/l</text>
<rect x="1250.00" y="445.90" width="76.30" height="9.20" fill="#000" stroke="none" stroke-width="1"/>
<text x="1307.80" y="453.08" font-size="6.6" font-weight="400" fill="#ff0000" letter-spacing="0.442"  class="dv">Error</text>
<rect x="1174.00" y="395.70" width="26.70" height="19.30" fill="#000" stroke="none" stroke-width="1"/>
<rect x="1242.50" y="395.50" width="7.00" height="67.00" fill="#000" stroke="none" stroke-width="1"/>
<rect x="1199.50" y="394.00" width="50.50" height="2.00" fill="#00ff00" stroke="none" stroke-width="1"/>
<rect x="1199.50" y="461.00" width="50.50" height="2.00" fill="#00ff00" stroke="none" stroke-width="1"/>
<line x1="1242.50" y1="395.50" x2="1242.50" y2="462.50" stroke="#00ff00" stroke-width="1" />
<line x1="1249.50" y1="395.50" x2="1249.50" y2="462.50" stroke="#00ff00" stroke-width="1" />
<text x="1174.60" y="403.35" font-size="6.8" font-weight="400" fill="#00ff00" letter-spacing="0.240"  class="dv">6.5m</text>
<text x="1174.60" y="413.35" font-size="6.8" font-weight="400" fill="#00ff00" letter-spacing="0.354"  class="dv">671m3</text>
<rect x="1174.00" y="452.50" width="26.70" height="9.50" fill="#000" stroke="none" stroke-width="1"/>
<text x="1174.80" y="460.00" font-size="6.8" font-weight="400" fill="#00ff00" letter-spacing="0.000"  class="dv">0</text>
<rect x="1214.50" y="393.30" width="16.00" height="9.40" fill="#000" stroke="none" stroke-width="1"/>
<text x="1215.00" y="401.74" font-size="10.4" font-weight="700" fill="#ff0000" letter-spacing="-0.011" >HH</text>
<line x1="1230.50" y1="398.50" x2="1250.00" y2="398.50" stroke="#ff0000" stroke-width="1" />
<rect x="1222.20" y="400.10" width="8.30" height="10.40" fill="#000" stroke="none" stroke-width="1"/>
<text x="1223.00" y="409.04" font-size="10.4" font-weight="700" fill="#ffff00" letter-spacing="-0.811" >H</text>
<line x1="1230.20" y1="405.50" x2="1250.50" y2="405.50" stroke="#ffff00" stroke-width="1" />
<circle cx="1226.30" cy="429.50" r="14.00" fill="none" stroke="#8c8c8c" stroke-width="1"/>
<polygon points="1213.30,429.50 1226.30,416.30 1239.30,429.50 1226.30,442.70" fill="#8c8c8c" />
<rect x="1212.70" y="427.50" width="27.20" height="4.00" fill="#660000" stroke="#8c8c8c" stroke-width="0.9"/>
<rect x="86.00" y="600.00" width="165.00" height="88.00" fill="#660000" stroke="#b00000" stroke-width="2"/>
<rect x="128.90" y="601.30" width="79.20" height="13.00" fill="#000" stroke="none" stroke-width="1"/>
<text x="129.50" y="611.19" font-size="10.8" font-weight="700" fill="#00ff00" letter-spacing="-0.214" >NO.1 WB TK (S)</text>
<line x1="168.00" y1="629.80" x2="243.00" y2="629.80" stroke="#c00000" stroke-width="0.6" />
<line x1="168.00" y1="640.80" x2="243.00" y2="640.80" stroke="#c00000" stroke-width="0.6" />
<line x1="168.00" y1="651.80" x2="243.00" y2="651.80" stroke="#c00000" stroke-width="0.6" />
<line x1="168.00" y1="662.80" x2="243.00" y2="662.80" stroke="#c00000" stroke-width="0.6" />
<rect x="168.00" y="619.70" width="75.00" height="9.20" fill="#000" stroke="none" stroke-width="1"/>
<text x="224.50" y="626.88" font-size="6.6" font-weight="400" fill="#ff0000" letter-spacing="0.442"  class="dv">Error</text>
<rect x="168.00" y="630.70" width="75.00" height="9.20" fill="#000" stroke="none" stroke-width="1"/>
<text x="224.50" y="637.88" font-size="6.6" font-weight="400" fill="#ff0000" letter-spacing="0.442"  class="dv">Error</text>
<rect x="168.00" y="641.70" width="75.00" height="9.20" fill="#000" stroke="none" stroke-width="1"/>
<text x="224.50" y="648.88" font-size="6.6" font-weight="400" fill="#ff0000" letter-spacing="0.442"  class="dv">Error</text>
<rect x="168.00" y="652.70" width="75.00" height="9.20" fill="#000" stroke="none" stroke-width="1"/>
<text x="207.70" y="659.88" font-size="6.6" font-weight="400" fill="#00ff00" letter-spacing="0.460"  class="dv">1.000kg/l</text>
<rect x="168.00" y="663.70" width="75.00" height="9.20" fill="#000" stroke="none" stroke-width="1"/>
<text x="224.50" y="670.88" font-size="6.6" font-weight="400" fill="#ff0000" letter-spacing="0.442"  class="dv">Error</text>
<rect x="93.00" y="617.00" width="27.00" height="19.00" fill="#000" stroke="none" stroke-width="1"/>
<rect x="160.50" y="616.30" width="7.00" height="66.20" fill="#000" stroke="none" stroke-width="1"/>
<rect x="118.00" y="615.00" width="50.00" height="2.00" fill="#00ff00" stroke="none" stroke-width="1"/>
<rect x="118.00" y="681.00" width="50.00" height="2.00" fill="#00ff00" stroke="none" stroke-width="1"/>
<line x1="160.50" y1="616.30" x2="160.50" y2="682.50" stroke="#00ff00" stroke-width="1" />
<line x1="167.50" y1="616.30" x2="167.50" y2="682.50" stroke="#00ff00" stroke-width="1" />
<text x="93.60" y="624.65" font-size="6.8" font-weight="400" fill="#00ff00" letter-spacing="0.240"  class="dv">6.5m</text>
<text x="93.60" y="634.65" font-size="6.8" font-weight="400" fill="#00ff00" letter-spacing="0.354"  class="dv">674m3</text>
<rect x="93.00" y="672.50" width="27.00" height="9.50" fill="#000" stroke="none" stroke-width="1"/>
<text x="93.80" y="680.00" font-size="6.8" font-weight="400" fill="#00ff00" letter-spacing="0.000"  class="dv">0</text>
<rect x="133.20" y="615.30" width="16.00" height="9.40" fill="#000" stroke="none" stroke-width="1"/>
<text x="133.70" y="623.74" font-size="10.4" font-weight="700" fill="#ff0000" letter-spacing="-0.011" >HH</text>
<line x1="149.20" y1="620.50" x2="168.00" y2="620.50" stroke="#ff0000" stroke-width="1" />
<rect x="141.00" y="621.30" width="8.40" height="10.40" fill="#000" stroke="none" stroke-width="1"/>
<text x="141.80" y="630.24" font-size="10.4" font-weight="700" fill="#ffff00" letter-spacing="-0.711" >H</text>
<line x1="149.10" y1="626.50" x2="168.50" y2="626.50" stroke="#ffff00" stroke-width="1" />
<circle cx="144.50" cy="650.50" r="14.00" fill="none" stroke="#8c8c8c" stroke-width="1"/>
<polygon points="131.50,650.50 144.50,637.30 157.50,650.50 144.50,663.70" fill="#8c8c8c" />
<rect x="130.90" y="648.50" width="27.20" height="4.00" fill="#660000" stroke="#8c8c8c" stroke-width="0.9"/>
<rect x="259.00" y="611.00" width="96.00" height="157.00" fill="#660000" stroke="#b00000" stroke-width="2"/>
<rect x="266.90" y="612.30" width="79.40" height="13.00" fill="#000" stroke="none" stroke-width="1"/>
<text x="267.50" y="622.19" font-size="10.8" font-weight="700" fill="#00ff00" letter-spacing="-0.200" >NO.2 WB TK (S)</text>
<rect x="262.00" y="628.70" width="26.70" height="19.30" fill="#000" stroke="none" stroke-width="1"/>
<rect x="299.50" y="627.50" width="7.00" height="135.00" fill="#000" stroke="none" stroke-width="1"/>
<rect x="277.50" y="626.00" width="29.50" height="2.00" fill="#00ff00" stroke="none" stroke-width="1"/>
<rect x="277.50" y="761.00" width="29.50" height="2.00" fill="#00ff00" stroke="none" stroke-width="1"/>
<line x1="299.50" y1="627.50" x2="299.50" y2="762.50" stroke="#00ff00" stroke-width="1" />
<line x1="306.50" y1="627.50" x2="306.50" y2="762.50" stroke="#00ff00" stroke-width="1" />
<text x="262.60" y="636.35" font-size="6.8" font-weight="400" fill="#00ff00" letter-spacing="0.240"  class="dv">6.5m</text>
<text x="262.60" y="646.35" font-size="6.8" font-weight="400" fill="#00ff00" letter-spacing="0.354"  class="dv">550m3</text>
<rect x="262.00" y="752.50" width="26.70" height="8.70" fill="#000" stroke="none" stroke-width="1"/>
<text x="262.80" y="759.60" font-size="6.8" font-weight="400" fill="#00ff00" letter-spacing="0.000"  class="dv">0</text>
<rect x="278.20" y="629.80" width="16.00" height="9.40" fill="#000" stroke="none" stroke-width="1"/>
<text x="278.70" y="638.24" font-size="10.4" font-weight="700" fill="#ff0000" letter-spacing="-0.011" >HH</text>
<line x1="294.20" y1="634.50" x2="307.00" y2="634.50" stroke="#ff0000" stroke-width="1" />
<rect x="285.90" y="643.50" width="8.10" height="10.40" fill="#000" stroke="none" stroke-width="1"/>
<text x="286.70" y="652.44" font-size="10.4" font-weight="700" fill="#ffff00" letter-spacing="-1.011" >H</text>
<line x1="293.70" y1="648.50" x2="307.50" y2="648.50" stroke="#ffff00" stroke-width="1" />
<circle cx="283.30" cy="695.50" r="14.00" fill="none" stroke="#8c8c8c" stroke-width="1"/>
<polygon points="270.30,695.50 283.30,682.30 296.30,695.50 283.30,708.70" fill="#8c8c8c" />
<rect x="269.70" y="693.50" width="27.20" height="4.00" fill="#660000" stroke="#8c8c8c" stroke-width="0.9"/>
<rect x="422.00" y="612.00" width="80.00" height="158.00" fill="#660000" stroke="#b00000" stroke-width="2"/>
<rect x="429.40" y="613.50" width="63.70" height="13.00" fill="#000" stroke="none" stroke-width="1"/>
<text x="430.00" y="623.39" font-size="10.8" font-weight="700" fill="#00ff00" letter-spacing="-0.291" >S. WB TK (S)</text>
<rect x="425.00" y="629.30" width="26.70" height="19.40" fill="#000" stroke="none" stroke-width="1"/>
<rect x="454.50" y="628.70" width="7.20" height="135.60" fill="#000" stroke="none" stroke-width="1"/>
<rect x="437.00" y="627.00" width="25.20" height="2.00" fill="#00ff00" stroke="none" stroke-width="1"/>
<rect x="437.00" y="763.00" width="25.20" height="2.00" fill="#00ff00" stroke="none" stroke-width="1"/>
<line x1="454.50" y1="628.70" x2="454.50" y2="764.30" stroke="#00ff00" stroke-width="1" />
<line x1="461.50" y1="628.70" x2="461.50" y2="764.30" stroke="#00ff00" stroke-width="1" />
<text x="425.60" y="636.95" font-size="6.8" font-weight="400" fill="#00ff00" letter-spacing="0.240"  class="dv">6.5m</text>
<text x="425.60" y="646.95" font-size="6.8" font-weight="400" fill="#00ff00" letter-spacing="0.354"  class="dv">183m3</text>
<rect x="425.00" y="754.50" width="26.70" height="8.70" fill="#000" stroke="none" stroke-width="1"/>
<text x="425.80" y="761.60" font-size="6.8" font-weight="400" fill="#00ff00" letter-spacing="0.000"  class="dv">0</text>
<rect x="438.20" y="630.80" width="16.00" height="9.40" fill="#000" stroke="none" stroke-width="1"/>
<text x="438.70" y="639.24" font-size="10.4" font-weight="700" fill="#ff0000" letter-spacing="-0.011" >HH</text>
<line x1="454.20" y1="635.50" x2="462.20" y2="635.50" stroke="#ff0000" stroke-width="1" />
<rect x="445.70" y="644.50" width="8.10" height="10.40" fill="#000" stroke="none" stroke-width="1"/>
<text x="446.50" y="653.44" font-size="10.4" font-weight="700" fill="#ffff00" letter-spacing="-1.011" >H</text>
<line x1="453.50" y1="649.50" x2="462.70" y2="649.50" stroke="#ffff00" stroke-width="1" />
<circle cx="438.30" cy="697.50" r="14.00" fill="none" stroke="#8c8c8c" stroke-width="1"/>
<polygon points="425.30,697.50 438.30,684.30 451.30,697.50 438.30,710.70" fill="#8c8c8c" />
<rect x="424.70" y="695.50" width="27.20" height="4.00" fill="#660000" stroke="#8c8c8c" stroke-width="0.9"/>
<rect x="1057.00" y="612.00" width="104.00" height="156.00" fill="#660000" stroke="#b00000" stroke-width="2"/>
<rect x="1068.90" y="613.50" width="79.20" height="13.00" fill="#000" stroke="none" stroke-width="1"/>
<text x="1069.50" y="623.39" font-size="10.8" font-weight="700" fill="#00ff00" letter-spacing="-0.214" >NO.3 WB TK (S)</text>
<rect x="1109.30" y="632.10" width="47.00" height="9.20" fill="#000" stroke="none" stroke-width="1"/>
<text x="1137.80" y="639.28" font-size="6.6" font-weight="400" fill="#ff0000" letter-spacing="0.442"  class="dv">Error</text>
<rect x="1109.30" y="660.10" width="47.00" height="9.20" fill="#000" stroke="none" stroke-width="1"/>
<text x="1137.80" y="667.28" font-size="6.6" font-weight="400" fill="#ff0000" letter-spacing="0.442"  class="dv">Error</text>
<rect x="1109.30" y="688.10" width="47.00" height="9.20" fill="#000" stroke="none" stroke-width="1"/>
<text x="1137.80" y="695.28" font-size="6.6" font-weight="400" fill="#ff0000" letter-spacing="0.442"  class="dv">Error</text>
<rect x="1109.30" y="716.10" width="47.00" height="9.20" fill="#000" stroke="none" stroke-width="1"/>
<text x="1121.00" y="723.28" font-size="6.6" font-weight="400" fill="#00ff00" letter-spacing="0.460"  class="dv">1.000kg/l</text>
<rect x="1109.30" y="744.10" width="47.00" height="9.20" fill="#000" stroke="none" stroke-width="1"/>
<text x="1137.80" y="751.28" font-size="6.6" font-weight="400" fill="#ff0000" letter-spacing="0.442"  class="dv">Error</text>
<rect x="1061.00" y="629.30" width="26.50" height="19.40" fill="#000" stroke="none" stroke-width="1"/>
<rect x="1101.50" y="628.70" width="7.20" height="133.80" fill="#000" stroke="none" stroke-width="1"/>
<rect x="1077.50" y="627.00" width="31.70" height="2.00" fill="#00ff00" stroke="none" stroke-width="1"/>
<rect x="1077.50" y="761.00" width="31.70" height="2.00" fill="#00ff00" stroke="none" stroke-width="1"/>
<line x1="1101.50" y1="628.70" x2="1101.50" y2="762.50" stroke="#00ff00" stroke-width="1" />
<line x1="1108.50" y1="628.70" x2="1108.50" y2="762.50" stroke="#00ff00" stroke-width="1" />
<text x="1061.60" y="636.95" font-size="6.8" font-weight="400" fill="#00ff00" letter-spacing="0.240"  class="dv">6.5m</text>
<text x="1061.60" y="646.95" font-size="6.8" font-weight="400" fill="#00ff00" letter-spacing="0.354"  class="dv">550m3</text>
<rect x="1061.00" y="752.50" width="26.50" height="9.20" fill="#000" stroke="none" stroke-width="1"/>
<text x="1061.80" y="759.85" font-size="6.8" font-weight="400" fill="#00ff00" letter-spacing="0.000"  class="dv">0</text>
<rect x="1080.20" y="631.00" width="16.00" height="9.40" fill="#000" stroke="none" stroke-width="1"/>
<text x="1080.70" y="639.44" font-size="10.4" font-weight="700" fill="#ff0000" letter-spacing="-0.011" >HH</text>
<line x1="1096.20" y1="635.50" x2="1109.20" y2="635.50" stroke="#ff0000" stroke-width="1" />
<rect x="1088.10" y="643.50" width="8.10" height="10.40" fill="#000" stroke="none" stroke-width="1"/>
<text x="1088.90" y="652.44" font-size="10.4" font-weight="700" fill="#ffff00" letter-spacing="-1.011" >H</text>
<line x1="1095.90" y1="648.50" x2="1109.70" y2="648.50" stroke="#ffff00" stroke-width="1" />
<circle cx="1085.50" cy="696.70" r="14.00" fill="none" stroke="#8c8c8c" stroke-width="1"/>
<polygon points="1072.50,696.70 1085.50,683.50 1098.50,696.70 1085.50,709.90" fill="#8c8c8c" />
<rect x="1071.90" y="694.70" width="27.20" height="4.00" fill="#660000" stroke="#8c8c8c" stroke-width="0.9"/>
<rect x="1168.00" y="601.00" width="164.00" height="88.00" fill="#660000" stroke="#b00000" stroke-width="2"/>
<rect x="1209.90" y="602.50" width="79.40" height="13.00" fill="#000" stroke="none" stroke-width="1"/>
<text x="1210.50" y="612.39" font-size="10.8" font-weight="700" fill="#00ff00" letter-spacing="-0.200" >NO.4 WB TK (S)</text>
<rect x="1175.00" y="618.00" width="26.70" height="19.70" fill="#000" stroke="none" stroke-width="1"/>
<rect x="1242.50" y="618.00" width="7.00" height="65.70" fill="#000" stroke="none" stroke-width="1"/>
<rect x="1200.00" y="617.00" width="50.00" height="2.00" fill="#00ff00" stroke="none" stroke-width="1"/>
<rect x="1200.00" y="682.00" width="50.00" height="2.00" fill="#00ff00" stroke="none" stroke-width="1"/>
<line x1="1242.50" y1="618.00" x2="1242.50" y2="683.70" stroke="#00ff00" stroke-width="1" />
<line x1="1249.50" y1="618.00" x2="1249.50" y2="683.70" stroke="#00ff00" stroke-width="1" />
<text x="1175.60" y="625.65" font-size="6.8" font-weight="400" fill="#00ff00" letter-spacing="0.240"  class="dv">6.5m</text>
<text x="1175.60" y="635.65" font-size="6.8" font-weight="400" fill="#00ff00" letter-spacing="0.354"  class="dv">671m3</text>
<rect x="1175.00" y="673.70" width="26.70" height="9.30" fill="#000" stroke="none" stroke-width="1"/>
<text x="1175.80" y="681.10" font-size="6.8" font-weight="400" fill="#00ff00" letter-spacing="0.000"  class="dv">0</text>
<rect x="1214.50" y="616.80" width="16.00" height="9.40" fill="#000" stroke="none" stroke-width="1"/>
<text x="1215.00" y="625.24" font-size="10.4" font-weight="700" fill="#ff0000" letter-spacing="-0.011" >HH</text>
<line x1="1230.50" y1="621.50" x2="1250.00" y2="621.50" stroke="#ff0000" stroke-width="1" />
<rect x="1222.20" y="622.30" width="8.30" height="10.40" fill="#000" stroke="none" stroke-width="1"/>
<text x="1223.00" y="631.24" font-size="10.4" font-weight="700" fill="#ffff00" letter-spacing="-0.811" >H</text>
<line x1="1230.20" y1="627.50" x2="1250.50" y2="627.50" stroke="#ffff00" stroke-width="1" />
<circle cx="1226.30" cy="651.30" r="14.00" fill="none" stroke="#8c8c8c" stroke-width="1"/>
<polygon points="1213.30,651.30 1226.30,638.10 1239.30,651.30 1226.30,664.50" fill="#8c8c8c" />
<rect x="1212.70" y="649.30" width="27.20" height="4.00" fill="#660000" stroke="#8c8c8c" stroke-width="0.9"/>
<line x1="192.50" y1="261.50" x2="709.00" y2="261.50" stroke="#9a9a9a" stroke-width="1" />
<path d="M709.00 261.70 A8 8 0 0 1 725.00 261.70" fill="none" stroke="#9a9a9a" stroke-width="1"/>
<line x1="725.00" y1="261.50" x2="1119.00" y2="261.50" stroke="#9a9a9a" stroke-width="1" />
<line x1="192.50" y1="261.70" x2="192.50" y2="808.30" stroke="#9a9a9a" stroke-width="1" />
<line x1="192.50" y1="808.50" x2="708.50" y2="808.50" stroke="#9a9a9a" stroke-width="1" />
<path d="M708.50 808.30 A8 8 0 0 1 724.50 808.30" fill="none" stroke="#9a9a9a" stroke-width="1"/>
<line x1="724.50" y1="808.50" x2="890.00" y2="808.50" stroke="#9a9a9a" stroke-width="1" />
<line x1="308.50" y1="261.70" x2="308.50" y2="302.00" stroke="#9a9a9a" stroke-width="1" />
<line x1="308.50" y1="765.00" x2="308.50" y2="808.30" stroke="#9a9a9a" stroke-width="1" />
<line x1="1119.50" y1="764.00" x2="1119.50" y2="808.30" stroke="#9a9a9a" stroke-width="1" />
<line x1="352.50" y1="331.50" x2="368.00" y2="331.50" stroke="#9a9a9a" stroke-width="1" />
<line x1="392.00" y1="331.50" x2="414.00" y2="331.50" stroke="#9a9a9a" stroke-width="1" stroke-dasharray="6 3"/>
<polygon points="406.90,329.30 406.90,334.10 402.90,331.70" fill="#ff0000" />
<polygon points="398.90,329.60 398.90,333.80 402.90,331.70" fill="#e8e8e8" />
<polyline points="425.50,326.20 414.00,331.70 425.50,337.20" stroke="#9a9a9a" stroke-width="1" fill="none" />
<line x1="425.50" y1="331.50" x2="414.00" y2="331.50" stroke="#9a9a9a" stroke-width="1" />
<line x1="352.50" y1="432.50" x2="368.00" y2="432.50" stroke="#9a9a9a" stroke-width="1" />
<line x1="392.00" y1="432.50" x2="414.00" y2="432.50" stroke="#9a9a9a" stroke-width="1" stroke-dasharray="6 3"/>
<polygon points="406.90,430.10 406.90,434.90 402.90,432.50" fill="#ff0000" />
<polygon points="398.90,430.40 398.90,434.60 402.90,432.50" fill="#e8e8e8" />
<polyline points="425.50,427.00 414.00,432.50 425.50,438.00" stroke="#9a9a9a" stroke-width="1" fill="none" />
<line x1="425.50" y1="432.50" x2="414.00" y2="432.50" stroke="#9a9a9a" stroke-width="1" />
<line x1="352.50" y1="646.50" x2="368.70" y2="646.50" stroke="#9a9a9a" stroke-width="1" />
<line x1="392.70" y1="646.50" x2="414.00" y2="646.50" stroke="#9a9a9a" stroke-width="1" stroke-dasharray="6 3"/>
<polygon points="406.90,643.90 406.90,648.70 402.90,646.30" fill="#ff0000" />
<polygon points="398.90,644.20 398.90,648.40 402.90,646.30" fill="#e8e8e8" />
<polyline points="425.50,640.80 414.00,646.30 425.50,651.80" stroke="#9a9a9a" stroke-width="1" fill="none" />
<line x1="425.50" y1="646.50" x2="414.00" y2="646.50" stroke="#9a9a9a" stroke-width="1" />
<line x1="352.50" y1="742.50" x2="369.70" y2="742.50" stroke="#9a9a9a" stroke-width="1" />
<line x1="393.70" y1="742.50" x2="414.00" y2="742.50" stroke="#9a9a9a" stroke-width="1" stroke-dasharray="6 3"/>
<polygon points="406.90,739.60 406.90,744.40 402.90,742.00" fill="#ff0000" />
<polygon points="398.90,739.90 398.90,744.10 402.90,742.00" fill="#e8e8e8" />
<polyline points="425.50,736.50 414.00,742.00 425.50,747.50" stroke="#9a9a9a" stroke-width="1" fill="none" />
<line x1="425.50" y1="742.50" x2="414.00" y2="742.50" stroke="#9a9a9a" stroke-width="1" />
<line x1="536.50" y1="289.00" x2="536.50" y2="443.30" stroke="#9a9a9a" stroke-width="1" />
<polyline points="530.70,288.50 536.70,300.00 542.70,288.50" stroke="#9a9a9a" stroke-width="1" fill="none" />
<line x1="536.50" y1="288.50" x2="536.50" y2="300.00" stroke="#9a9a9a" stroke-width="1" />
<line x1="536.50" y1="626.70" x2="536.50" y2="781.00" stroke="#9a9a9a" stroke-width="1" />
<polyline points="530.70,781.00 536.70,769.50 542.70,781.00" stroke="#9a9a9a" stroke-width="1" fill="none" />
<line x1="536.50" y1="781.00" x2="536.50" y2="769.50" stroke="#9a9a9a" stroke-width="1" />
<line x1="717.50" y1="232.50" x2="717.50" y2="253.70" stroke="#9a9a9a" stroke-width="1" />
<line x1="717.50" y1="253.70" x2="717.50" y2="316.50" stroke="#9a9a9a" stroke-width="1" />
<polyline points="711.00,232.50 717.00,244.00 723.00,232.50" stroke="#9a9a9a" stroke-width="1" fill="none" />
<line x1="717.50" y1="232.50" x2="717.50" y2="244.00" stroke="#9a9a9a" stroke-width="1" />
<line x1="717.00" y1="316.50" x2="740.00" y2="316.50" stroke="#9a9a9a" stroke-width="1" />
<line x1="764.00" y1="316.50" x2="785.50" y2="316.50" stroke="#9a9a9a" stroke-width="1" />
<line x1="785.50" y1="316.50" x2="785.50" y2="336.30" stroke="#9a9a9a" stroke-width="1" />
<line x1="716.50" y1="755.00" x2="716.50" y2="837.50" stroke="#9a9a9a" stroke-width="1" />
<polyline points="710.30,837.50 716.30,826.00 722.30,837.50" stroke="#9a9a9a" stroke-width="1" fill="none" />
<line x1="716.50" y1="837.50" x2="716.50" y2="826.00" stroke="#9a9a9a" stroke-width="1" />
<line x1="716.30" y1="755.50" x2="740.00" y2="755.50" stroke="#9a9a9a" stroke-width="1" />
<line x1="764.00" y1="755.50" x2="784.30" y2="755.50" stroke="#9a9a9a" stroke-width="1" />
<line x1="784.50" y1="755.00" x2="784.50" y2="733.30" stroke="#9a9a9a" stroke-width="1" />
<line x1="609.50" y1="261.70" x2="609.50" y2="409.30" stroke="#9a9a9a" stroke-width="1" />
<line x1="620.50" y1="261.70" x2="620.50" y2="336.30" stroke="#9a9a9a" stroke-width="1" />
<line x1="880.50" y1="261.70" x2="880.50" y2="336.30" stroke="#9a9a9a" stroke-width="1" />
<line x1="890.50" y1="261.70" x2="890.50" y2="409.30" stroke="#9a9a9a" stroke-width="1" />
<line x1="620.50" y1="336.50" x2="880.50" y2="336.50" stroke="#9a9a9a" stroke-width="1" />
<line x1="707.50" y1="336.30" x2="707.50" y2="409.30" stroke="#9a9a9a" stroke-width="1" />
<line x1="791.50" y1="336.30" x2="791.50" y2="409.30" stroke="#9a9a9a" stroke-width="1" />
<line x1="609.30" y1="409.50" x2="890.50" y2="409.50" stroke="#9a9a9a" stroke-width="1" />
<line x1="674.50" y1="409.30" x2="674.50" y2="443.30" stroke="#9a9a9a" stroke-width="1" />
<line x1="780.50" y1="409.30" x2="780.50" y2="443.30" stroke="#9a9a9a" stroke-width="1" />
<line x1="505.50" y1="443.50" x2="936.00" y2="443.50" stroke="#9a9a9a" stroke-width="1" />
<line x1="609.50" y1="661.70" x2="609.50" y2="808.30" stroke="#9a9a9a" stroke-width="1" />
<line x1="620.50" y1="733.30" x2="620.50" y2="808.30" stroke="#9a9a9a" stroke-width="1" />
<line x1="880.50" y1="733.30" x2="880.50" y2="808.30" stroke="#9a9a9a" stroke-width="1" />
<line x1="620.50" y1="733.50" x2="880.50" y2="733.50" stroke="#9a9a9a" stroke-width="1" />
<line x1="707.50" y1="661.70" x2="707.50" y2="733.30" stroke="#9a9a9a" stroke-width="1" />
<line x1="791.50" y1="661.70" x2="791.50" y2="733.30" stroke="#9a9a9a" stroke-width="1" />
<line x1="609.30" y1="661.50" x2="780.50" y2="661.50" stroke="#9a9a9a" stroke-width="1" />
<line x1="674.50" y1="626.70" x2="674.50" y2="661.70" stroke="#9a9a9a" stroke-width="1" />
<line x1="780.50" y1="626.50" x2="936.00" y2="626.50" stroke="#9a9a9a" stroke-width="1" />
<polyline points="960.50,326.00 972.00,331.50 960.50,337.00" stroke="#9a9a9a" stroke-width="1" fill="none" />
<line x1="960.50" y1="331.50" x2="972.00" y2="331.50" stroke="#9a9a9a" stroke-width="1" />
<line x1="972.00" y1="331.50" x2="998.70" y2="331.50" stroke="#9a9a9a" stroke-width="1" stroke-dasharray="7 3"/>
<polygon points="980.50,329.10 980.50,333.90 984.50,331.50" fill="#ff0000" />
<polygon points="988.50,329.40 988.50,333.60 984.50,331.50" fill="#e8e8e8" />
<line x1="1022.70" y1="331.50" x2="1062.00" y2="331.50" stroke="#9a9a9a" stroke-width="1" />
<polyline points="960.50,431.70 972.00,437.20 960.50,442.70" stroke="#9a9a9a" stroke-width="1" fill="none" />
<line x1="960.50" y1="437.50" x2="972.00" y2="437.50" stroke="#9a9a9a" stroke-width="1" />
<line x1="972.00" y1="437.50" x2="998.00" y2="437.50" stroke="#9a9a9a" stroke-width="1" stroke-dasharray="7 3"/>
<polygon points="980.50,434.80 980.50,439.60 984.50,437.20" fill="#ff0000" />
<polygon points="988.50,435.10 988.50,439.30 984.50,437.20" fill="#e8e8e8" />
<line x1="1022.00" y1="437.50" x2="1062.00" y2="437.50" stroke="#9a9a9a" stroke-width="1" />
<polyline points="960.50,629.50 972.00,635.00 960.50,640.50" stroke="#9a9a9a" stroke-width="1" fill="none" />
<line x1="960.50" y1="635.50" x2="972.00" y2="635.50" stroke="#9a9a9a" stroke-width="1" />
<line x1="972.00" y1="635.50" x2="998.70" y2="635.50" stroke="#9a9a9a" stroke-width="1" stroke-dasharray="7 3"/>
<polygon points="980.50,632.60 980.50,637.40 984.50,635.00" fill="#ff0000" />
<polygon points="988.50,632.90 988.50,637.10 984.50,635.00" fill="#e8e8e8" />
<line x1="1022.70" y1="635.50" x2="1062.00" y2="635.50" stroke="#9a9a9a" stroke-width="1" />
<polyline points="960.50,736.30 972.00,741.80 960.50,747.30" stroke="#9a9a9a" stroke-width="1" fill="none" />
<line x1="960.50" y1="741.50" x2="972.00" y2="741.50" stroke="#9a9a9a" stroke-width="1" />
<line x1="972.00" y1="741.50" x2="999.70" y2="741.50" stroke="#9a9a9a" stroke-width="1" stroke-dasharray="7 3"/>
<polygon points="980.50,739.40 980.50,744.20 984.50,741.80" fill="#ff0000" />
<polygon points="988.50,739.70 988.50,743.90 984.50,741.80" fill="#e8e8e8" />
<line x1="1023.70" y1="741.50" x2="1062.00" y2="741.50" stroke="#9a9a9a" stroke-width="1" />
<line x1="471.50" y1="461.50" x2="471.50" y2="501.30" stroke="#9a9a9a" stroke-width="1" />
<line x1="471.30" y1="501.50" x2="655.00" y2="501.50" stroke="#9a9a9a" stroke-width="1" />
<line x1="655.00" y1="569.50" x2="928.00" y2="569.50" stroke="#9a9a9a" stroke-width="1" />
<line x1="859.50" y1="501.30" x2="859.50" y2="569.50" stroke="#9a9a9a" stroke-width="1" />
<line x1="952.00" y1="569.50" x2="958.00" y2="569.50" stroke="#9a9a9a" stroke-width="1" />
<line x1="110.50" y1="465.00" x2="110.50" y2="477.50" stroke="#9a9a9a" stroke-width="1" />
<line x1="110.50" y1="592.00" x2="110.50" y2="602.00" stroke="#9a9a9a" stroke-width="1" />
<line x1="159.50" y1="465.00" x2="159.50" y2="477.50" stroke="#9a9a9a" stroke-width="1" />
<line x1="159.50" y1="592.00" x2="159.50" y2="602.00" stroke="#9a9a9a" stroke-width="1" />
<line x1="223.50" y1="465.00" x2="223.50" y2="477.50" stroke="#9a9a9a" stroke-width="1" />
<line x1="223.50" y1="592.00" x2="223.50" y2="602.00" stroke="#9a9a9a" stroke-width="1" />
<line x1="110.50" y1="501.50" x2="110.50" y2="568.00" stroke="#9a9a9a" stroke-width="1" />
<line x1="223.50" y1="501.50" x2="223.50" y2="568.00" stroke="#9a9a9a" stroke-width="1" />
<polyline points="159.50,501.50 159.50,510.50 192.50,510.50" stroke="#9a9a9a" stroke-width="1" fill="none" />
<polyline points="159.50,568.50 159.50,560.50 192.50,560.50" stroke="#9a9a9a" stroke-width="1" fill="none" />
<line x1="1198.50" y1="466.00" x2="1198.50" y2="477.00" stroke="#9a9a9a" stroke-width="1" />
<line x1="1198.50" y1="592.50" x2="1198.50" y2="604.00" stroke="#9a9a9a" stroke-width="1" />
<line x1="1262.50" y1="466.00" x2="1262.50" y2="477.00" stroke="#9a9a9a" stroke-width="1" />
<line x1="1262.50" y1="592.50" x2="1262.50" y2="604.00" stroke="#9a9a9a" stroke-width="1" />
<line x1="1303.50" y1="466.00" x2="1303.50" y2="477.00" stroke="#9a9a9a" stroke-width="1" />
<line x1="1303.50" y1="592.50" x2="1303.50" y2="604.00" stroke="#9a9a9a" stroke-width="1" />
<line x1="1198.50" y1="501.00" x2="1198.50" y2="568.50" stroke="#9a9a9a" stroke-width="1" />
<line x1="1303.50" y1="501.00" x2="1303.50" y2="568.50" stroke="#9a9a9a" stroke-width="1" />
<polyline points="1262.50,500.50 1262.50,510.50 1229.50,510.50" stroke="#9a9a9a" stroke-width="1" fill="none" />
<polyline points="1262.50,568.50 1262.50,560.50 1229.50,560.50" stroke="#9a9a9a" stroke-width="1" fill="none" />
<polyline points="928.50,501.50 655.50,501.50 655.50,569.50 471.50,569.50 471.50,608.50" stroke="#ffc000" stroke-width="3" fill="none" />
<line x1="952.00" y1="500.50" x2="958.00" y2="500.50" stroke="#ffc000" stroke-width="3" />
<polyline points="507.50,626.50 780.50,626.50 780.50,661.50 890.50,661.50 890.50,808.50 1229.50,808.50 1229.50,261.50 1119.50,261.50 1119.50,302.50" stroke="#ffc000" stroke-width="3" fill="none" />
<polygon points="655.50,501.30 669.00,498.10 669.00,504.50" fill="#ffc000" />
<polygon points="733.00,501.30 746.50,498.10 746.50,504.50" fill="#ffc000" />
<polygon points="861.00,501.30 874.50,498.10 874.50,504.50" fill="#ffc000" />
<polygon points="655.50,569.00 652.30,555.50 658.70,555.50" fill="#ffc000" />
<polygon points="471.30,569.50 484.80,566.30 484.80,572.70" fill="#ffc000" />
<polygon points="512.00,569.50 525.50,566.30 525.50,572.70" fill="#ffc000" />
<polygon points="471.30,606.00 468.10,592.50 474.50,592.50" fill="#ffc000" />
<polygon points="536.00,626.70 522.50,623.50 522.50,629.90" fill="#ffc000" />
<polygon points="672.00,626.70 658.50,623.50 658.50,629.90" fill="#ffc000" />
<polygon points="779.50,626.70 766.00,623.50 766.00,629.90" fill="#ffc000" />
<polygon points="888.50,661.70 875.00,658.50 875.00,664.90" fill="#ffc000" />
<polygon points="890.50,807.00 887.30,793.50 893.70,793.50" fill="#ffc000" />
<polygon points="1118.00,808.30 1104.50,805.10 1104.50,811.50" fill="#ffc000" />
<polygon points="1228.00,808.30 1214.50,805.10 1214.50,811.50" fill="#ffc000" />
<polygon points="1229.50,560.00 1226.30,573.50 1232.70,573.50" fill="#ffc000" />
<polygon points="1229.50,510.00 1226.30,523.50 1232.70,523.50" fill="#ffc000" />
<polygon points="1229.50,264.00 1226.30,277.50 1232.70,277.50" fill="#ffc000" />
<polygon points="1120.00,261.70 1133.50,258.50 1133.50,264.90" fill="#ffc000" />
<polygon points="1119.30,302.00 1116.10,288.50 1122.50,288.50" fill="#ffc000" />
<polygon points="301.80,266.00 314.80,266.00 308.30,278.00 314.80,290.00 301.80,290.00 308.30,278.00" fill="#ff0000" />
<line x1="298.80" y1="278.50" x2="308.30" y2="278.50" stroke="#ff0000" stroke-width="1" />
<circle cx="298.80" cy="278.00" r="2.80" fill="#ff0000" stroke="none" stroke-width="1"/>
<polygon points="301.80,778.70 314.80,778.70 308.30,790.70 314.80,802.70 301.80,802.70 308.30,790.70" fill="#ff0000" />
<line x1="298.80" y1="790.50" x2="308.30" y2="790.50" stroke="#ff0000" stroke-width="1" />
<circle cx="298.80" cy="790.70" r="2.80" fill="#ff0000" stroke="none" stroke-width="1"/>
<polygon points="1112.80,266.00 1125.80,266.00 1119.30,278.00 1125.80,290.00 1112.80,290.00 1119.30,278.00" fill="#00ff00" />
<line x1="1109.80" y1="278.50" x2="1119.30" y2="278.50" stroke="#00ff00" stroke-width="1" />
<circle cx="1109.80" cy="278.00" r="2.80" fill="#00ff00" stroke="none" stroke-width="1"/>
<polygon points="1112.80,778.00 1125.80,778.00 1119.30,790.00 1125.80,802.00 1112.80,802.00 1119.30,790.00" fill="#ff0000" />
<line x1="1109.80" y1="790.50" x2="1119.30" y2="790.50" stroke="#ff0000" stroke-width="1" />
<circle cx="1109.80" cy="790.00" r="2.80" fill="#ff0000" stroke="none" stroke-width="1"/>
<polygon points="368.00,325.50 368.00,337.90 380.00,331.70 392.00,337.90 392.00,325.50 380.00,331.70" fill="#ff0000" />
<line x1="380.50" y1="331.70" x2="380.50" y2="321.70" stroke="#ff0000" stroke-width="1" />
<circle cx="380.00" cy="321.70" r="2.80" fill="#ff0000" stroke="none" stroke-width="1"/>
<polygon points="368.00,426.30 368.00,438.70 380.00,432.50 392.00,438.70 392.00,426.30 380.00,432.50" fill="#ff0000" />
<line x1="380.50" y1="432.50" x2="380.50" y2="422.50" stroke="#ff0000" stroke-width="1" />
<circle cx="380.00" cy="422.50" r="2.80" fill="#ff0000" stroke="none" stroke-width="1"/>
<polygon points="368.70,640.10 368.70,652.50 380.70,646.30 392.70,652.50 392.70,640.10 380.70,646.30" fill="#ff0000" />
<line x1="380.50" y1="646.30" x2="380.50" y2="636.30" stroke="#ff0000" stroke-width="1" />
<circle cx="380.70" cy="636.30" r="2.80" fill="#ff0000" stroke="none" stroke-width="1"/>
<polygon points="369.70,735.80 369.70,748.20 381.70,742.00 393.70,748.20 393.70,735.80 381.70,742.00" fill="#ff0000" />
<line x1="381.50" y1="742.00" x2="381.50" y2="732.00" stroke="#ff0000" stroke-width="1" />
<circle cx="381.70" cy="732.00" r="2.80" fill="#ff0000" stroke="none" stroke-width="1"/>
<polygon points="998.70,325.30 998.70,337.70 1010.70,331.50 1022.70,337.70 1022.70,325.30 1010.70,331.50" fill="#ff0000" />
<line x1="1010.50" y1="331.50" x2="1010.50" y2="321.50" stroke="#ff0000" stroke-width="1" />
<circle cx="1010.70" cy="321.50" r="2.80" fill="#ff0000" stroke="none" stroke-width="1"/>
<polygon points="998.00,431.00 998.00,443.40 1010.00,437.20 1022.00,443.40 1022.00,431.00 1010.00,437.20" fill="#ff0000" />
<line x1="1010.50" y1="437.20" x2="1010.50" y2="427.20" stroke="#ff0000" stroke-width="1" />
<circle cx="1010.00" cy="427.20" r="2.80" fill="#ff0000" stroke="none" stroke-width="1"/>
<polygon points="998.70,628.80 998.70,641.20 1010.70,635.00 1022.70,641.20 1022.70,628.80 1010.70,635.00" fill="#ff0000" />
<line x1="1010.50" y1="635.00" x2="1010.50" y2="625.00" stroke="#ff0000" stroke-width="1" />
<circle cx="1010.70" cy="625.00" r="2.80" fill="#ff0000" stroke="none" stroke-width="1"/>
<polygon points="999.70,735.60 999.70,748.00 1011.70,741.80 1023.70,748.00 1023.70,735.60 1011.70,741.80" fill="#ff0000" />
<line x1="1011.50" y1="741.80" x2="1011.50" y2="731.80" stroke="#ff0000" stroke-width="1" />
<circle cx="1011.70" cy="731.80" r="2.80" fill="#ff0000" stroke="none" stroke-width="1"/>
<polygon points="530.20,310.00 543.20,310.00 536.70,322.00 543.20,334.00 530.20,334.00 536.70,322.00" fill="#ff0000" />
<line x1="527.20" y1="322.50" x2="536.70" y2="322.50" stroke="#ff0000" stroke-width="1" />
<circle cx="527.20" cy="322.00" r="2.80" fill="#ff0000" stroke="none" stroke-width="1"/>
<circle cx="536.30" cy="363.00" r="11.10" fill="none" stroke="#ff0000" stroke-width="1.8"/>
<polygon points="536.30,352.20 543.50,371.40 529.10,371.40" fill="#ff0000" />
<polygon points="534.50,382.50 538.90,382.50 536.70,386.30 538.90,390.10 534.50,390.10 536.70,386.30" fill="#ff0000" />
<line x1="536.70" y1="386.50" x2="532.90" y2="386.50" stroke="#ff0000" stroke-width="1" />
<line x1="532.50" y1="384.10" x2="532.50" y2="388.50" stroke="#ff0000" stroke-width="1" />
<polygon points="530.20,403.00 543.20,403.00 536.70,415.00 543.20,427.00 530.20,427.00 536.70,415.00" fill="#ff0000" />
<line x1="527.20" y1="415.50" x2="536.70" y2="415.50" stroke="#ff0000" stroke-width="1" />
<circle cx="527.20" cy="415.00" r="2.80" fill="#ff0000" stroke="none" stroke-width="1"/>
<polygon points="530.20,641.70 543.20,641.70 536.70,653.70 543.20,665.70 530.20,665.70 536.70,653.70" fill="#ff0000" />
<line x1="527.20" y1="653.50" x2="536.70" y2="653.50" stroke="#ff0000" stroke-width="1" />
<circle cx="527.20" cy="653.70" r="2.80" fill="#ff0000" stroke="none" stroke-width="1"/>
<polygon points="534.50,681.20 538.90,681.20 536.70,685.00 538.90,688.80 534.50,688.80 536.70,685.00" fill="#ff0000" />
<line x1="536.70" y1="685.50" x2="532.90" y2="685.50" stroke="#ff0000" stroke-width="1" />
<line x1="532.50" y1="682.80" x2="532.50" y2="687.20" stroke="#ff0000" stroke-width="1" />
<circle cx="536.30" cy="707.50" r="11.10" fill="none" stroke="#ff0000" stroke-width="1.8"/>
<polygon points="536.30,718.30 543.50,699.10 529.10,699.10" fill="#ff0000" />
<polygon points="530.20,733.70 543.20,733.70 536.70,745.70 543.20,757.70 530.20,757.70 536.70,745.70" fill="#ff0000" />
<line x1="527.20" y1="745.50" x2="536.70" y2="745.50" stroke="#ff0000" stroke-width="1" />
<circle cx="527.20" cy="745.70" r="2.80" fill="#ff0000" stroke="none" stroke-width="1"/>
<polygon points="775.00,255.50 775.00,267.90 787.00,261.70 799.00,267.90 799.00,255.50 787.00,261.70" fill="#ff0000" />
<line x1="787.50" y1="261.70" x2="787.50" y2="251.70" stroke="#ff0000" stroke-width="1" />
<circle cx="787.00" cy="251.70" r="2.80" fill="#ff0000" stroke="none" stroke-width="1"/>
<polygon points="740.00,310.50 740.00,322.90 752.00,316.70 764.00,322.90 764.00,310.50 752.00,316.70" fill="#ff0000" />
<line x1="752.50" y1="316.70" x2="752.50" y2="306.70" stroke="#ff0000" stroke-width="1" />
<circle cx="752.00" cy="306.70" r="2.80" fill="#ff0000" stroke="none" stroke-width="1"/>
<polygon points="723.40,314.30 723.40,319.10 727.40,316.70" fill="#ff0000" />
<polygon points="731.40,314.60 731.40,318.80 727.40,316.70" fill="#e8e8e8" />
<polygon points="635.80,329.90 635.80,343.10 648.00,336.50 660.20,343.10 660.20,329.90 648.00,336.50" fill="#ff0000" />
<line x1="648.50" y1="336.50" x2="648.50" y2="344.50" stroke="#ff0000" stroke-width="1" />
<polygon points="640.50,347.30 645.00,344.70 655.50,342.10 655.50,343.10 649.50,346.50 647.00,347.50" fill="#ff0000" />
<circle cx="647.20" cy="345.00" r="2.20" fill="#ff0000" stroke="none" stroke-width="1"/>
<rect x="643.00" y="323.50" width="10.00" height="8.80" fill="#cdcdcd" stroke="none" stroke-width="1"/>
<text x="643.70" y="330.59" font-size="7.2" font-weight="400" fill="#e83030" letter-spacing="-0.903" >0%</text>
<polygon points="841.80,329.90 841.80,343.10 854.00,336.50 866.20,343.10 866.20,329.90 854.00,336.50" fill="#ff0000" />
<line x1="854.50" y1="336.50" x2="854.50" y2="344.50" stroke="#ff0000" stroke-width="1" />
<polygon points="846.50,347.30 851.00,344.70 861.50,342.10 861.50,343.10 855.50,346.50 853.00,347.50" fill="#ff0000" />
<circle cx="853.20" cy="345.00" r="2.20" fill="#ff0000" stroke="none" stroke-width="1"/>
<rect x="849.00" y="323.50" width="10.00" height="8.80" fill="#cdcdcd" stroke="none" stroke-width="1"/>
<text x="849.70" y="330.59" font-size="7.2" font-weight="400" fill="#e83030" letter-spacing="-0.903" >0%</text>
<circle cx="707.00" cy="369.30" r="11.10" fill="none" stroke="#ff0000" stroke-width="1.8"/>
<polygon points="707.00,358.50 714.20,377.70 699.80,377.70" fill="#ff0000" />
<circle cx="791.30" cy="369.30" r="11.10" fill="none" stroke="#ff0000" stroke-width="1.8"/>
<polygon points="791.30,358.50 798.50,377.70 784.10,377.70" fill="#ff0000" />
<polygon points="705.10,343.40 709.90,343.40 707.50,347.40" fill="#ff0000" />
<polygon points="705.40,351.40 709.60,351.40 707.50,347.40" fill="#e8e8e8" />
<polygon points="789.10,343.40 793.90,343.40 791.50,347.40" fill="#ff0000" />
<polygon points="789.40,351.40 793.60,351.40 791.50,347.40" fill="#e8e8e8" />
<polygon points="602.80,371.00 615.80,371.00 609.30,383.00 615.80,395.00 602.80,395.00 609.30,383.00" fill="#ff0000" />
<line x1="599.80" y1="383.50" x2="609.30" y2="383.50" stroke="#ff0000" stroke-width="1" />
<circle cx="599.80" cy="383.00" r="2.80" fill="#ff0000" stroke="none" stroke-width="1"/>
<polygon points="884.00,371.00 897.00,371.00 890.50,383.00 897.00,395.00 884.00,395.00 890.50,383.00" fill="#ff0000" />
<line x1="881.00" y1="383.50" x2="890.50" y2="383.50" stroke="#ff0000" stroke-width="1" />
<circle cx="881.00" cy="383.00" r="2.80" fill="#ff0000" stroke="none" stroke-width="1"/>
<polygon points="720.00,403.10 720.00,415.50 732.00,409.30 744.00,415.50 744.00,403.10 732.00,409.30" fill="#ff0000" />
<line x1="732.50" y1="409.30" x2="732.50" y2="399.30" stroke="#ff0000" stroke-width="1" />
<circle cx="732.00" cy="399.30" r="2.80" fill="#ff0000" stroke="none" stroke-width="1"/>
<polygon points="667.80,413.70 680.80,413.70 674.30,425.70 680.80,437.70 667.80,437.70 674.30,425.70" fill="#ff0000" />
<line x1="664.80" y1="425.50" x2="674.30" y2="425.50" stroke="#ff0000" stroke-width="1" />
<circle cx="664.80" cy="425.70" r="2.80" fill="#ff0000" stroke="none" stroke-width="1"/>
<polygon points="774.00,413.70 787.00,413.70 780.50,425.70 787.00,437.70 774.00,437.70 780.50,425.70" fill="#ff0000" />
<line x1="771.00" y1="425.50" x2="780.50" y2="425.50" stroke="#ff0000" stroke-width="1" />
<circle cx="771.00" cy="425.70" r="2.80" fill="#ff0000" stroke="none" stroke-width="1"/>
<polygon points="847.00,440.90 847.00,445.70 851.00,443.30" fill="#ff0000" />
<polygon points="855.00,441.20 855.00,445.40 851.00,443.30" fill="#e8e8e8" />
<polygon points="866.70,441.10 866.70,445.50 870.50,443.30 874.30,445.50 874.30,441.10 870.50,443.30" fill="#ff0000" />
<line x1="870.50" y1="443.30" x2="870.50" y2="439.50" stroke="#ff0000" stroke-width="1" />
<line x1="868.30" y1="439.50" x2="872.70" y2="439.50" stroke="#ff0000" stroke-width="1" />
<polygon points="894.70,436.50 894.70,448.90 906.70,442.70 918.70,448.90 918.70,436.50 906.70,442.70" fill="#ff0000" />
<line x1="906.50" y1="442.70" x2="906.50" y2="432.70" stroke="#ff0000" stroke-width="1" />
<circle cx="906.70" cy="432.70" r="2.80" fill="#ff0000" stroke="none" stroke-width="1"/>
<polygon points="939.00,443.30 946.00,437.30 946.00,449.30" fill="#9a9a9a" />
<line x1="948.50" y1="437.30" x2="948.50" y2="449.30" stroke="#9a9a9a" stroke-width="1" />
<line x1="950.50" y1="437.30" x2="950.50" y2="449.30" stroke="#9a9a9a" stroke-width="1" />
<polygon points="667.80,631.00 680.80,631.00 674.30,643.00 680.80,655.00 667.80,655.00 674.30,643.00" fill="#ff0000" />
<line x1="664.80" y1="643.50" x2="674.30" y2="643.50" stroke="#ff0000" stroke-width="1" />
<circle cx="664.80" cy="643.00" r="2.80" fill="#ff0000" stroke="none" stroke-width="1"/>
<polygon points="774.00,631.00 787.00,631.00 780.50,643.00 787.00,655.00 774.00,655.00 780.50,643.00" fill="#00ff00" />
<line x1="771.00" y1="643.50" x2="780.50" y2="643.50" stroke="#00ff00" stroke-width="1" />
<circle cx="771.00" cy="643.00" r="2.80" fill="#00ff00" stroke="none" stroke-width="1"/>
<polygon points="719.30,655.10 719.30,667.50 731.30,661.30 743.30,667.50 743.30,655.10 731.30,661.30" fill="#ff0000" />
<line x1="731.50" y1="661.30" x2="731.50" y2="651.30" stroke="#ff0000" stroke-width="1" />
<circle cx="731.30" cy="651.30" r="2.80" fill="#ff0000" stroke="none" stroke-width="1"/>
<polygon points="602.80,671.00 615.80,671.00 609.30,683.00 615.80,695.00 602.80,695.00 609.30,683.00" fill="#ff0000" />
<line x1="599.80" y1="683.50" x2="609.30" y2="683.50" stroke="#ff0000" stroke-width="1" />
<circle cx="599.80" cy="683.00" r="2.80" fill="#ff0000" stroke="none" stroke-width="1"/>
<polygon points="884.00,671.00 897.00,671.00 890.50,683.00 897.00,695.00 884.00,695.00 890.50,683.00" fill="#00ff00" />
<line x1="881.00" y1="683.50" x2="890.50" y2="683.50" stroke="#00ff00" stroke-width="1" />
<circle cx="881.00" cy="683.00" r="2.80" fill="#00ff00" stroke="none" stroke-width="1"/>
<circle cx="707.00" cy="698.00" r="11.10" fill="none" stroke="#ff0000" stroke-width="1.8"/>
<polygon points="707.00,708.80 714.20,689.60 699.80,689.60" fill="#ff0000" />
<circle cx="791.30" cy="698.00" r="11.10" fill="none" stroke="#ff0000" stroke-width="1.8"/>
<polygon points="791.30,708.80 798.50,689.60 784.10,689.60" fill="#ff0000" />
<polygon points="705.10,726.50 709.90,726.50 707.50,722.50" fill="#ff0000" />
<polygon points="705.40,718.50 709.60,718.50 707.50,722.50" fill="#e8e8e8" />
<polygon points="789.10,726.50 793.90,726.50 791.50,722.50" fill="#ff0000" />
<polygon points="789.40,718.50 793.60,718.50 791.50,722.50" fill="#e8e8e8" />
<polygon points="639.50,726.70 639.50,739.90 651.70,733.30 663.90,739.90 663.90,726.70 651.70,733.30" fill="#ff0000" />
<line x1="651.50" y1="733.30" x2="651.50" y2="741.30" stroke="#ff0000" stroke-width="1" />
<polygon points="644.20,744.10 648.70,741.50 659.20,738.90 659.20,739.90 653.20,743.30 650.70,744.30" fill="#ff0000" />
<circle cx="650.90" cy="741.80" r="2.20" fill="#ff0000" stroke="none" stroke-width="1"/>
<rect x="646.70" y="720.30" width="10.00" height="8.80" fill="#cdcdcd" stroke="none" stroke-width="1"/>
<text x="647.40" y="727.39" font-size="7.2" font-weight="400" fill="#e83030" letter-spacing="-0.903" >0%</text>
<polygon points="841.80,726.70 841.80,739.90 854.00,733.30 866.20,739.90 866.20,726.70 854.00,733.30" fill="#ff0000" />
<line x1="854.50" y1="733.30" x2="854.50" y2="741.30" stroke="#ff0000" stroke-width="1" />
<polygon points="846.50,744.10 851.00,741.50 861.50,738.90 861.50,739.90 855.50,743.30 853.00,744.30" fill="#ff0000" />
<circle cx="853.20" cy="741.80" r="2.20" fill="#ff0000" stroke="none" stroke-width="1"/>
<rect x="849.00" y="720.30" width="10.00" height="8.80" fill="#cdcdcd" stroke="none" stroke-width="1"/>
<text x="849.70" y="727.39" font-size="7.2" font-weight="400" fill="#e83030" letter-spacing="-0.903" >0%</text>
<polygon points="740.00,748.80 740.00,761.20 752.00,755.00 764.00,761.20 764.00,748.80 752.00,755.00" fill="#ff0000" />
<line x1="752.50" y1="755.00" x2="752.50" y2="745.00" stroke="#ff0000" stroke-width="1" />
<circle cx="752.00" cy="745.00" r="2.80" fill="#ff0000" stroke="none" stroke-width="1"/>
<polygon points="723.50,752.60 723.50,757.40 727.50,755.00" fill="#ff0000" />
<polygon points="731.50,752.90 731.50,757.10 727.50,755.00" fill="#e8e8e8" />
<polygon points="771.00,801.50 771.00,813.90 783.00,807.70 795.00,813.90 795.00,801.50 783.00,807.70" fill="#ff0000" />
<line x1="783.50" y1="807.70" x2="783.50" y2="797.70" stroke="#ff0000" stroke-width="1" />
<circle cx="783.00" cy="797.70" r="2.80" fill="#ff0000" stroke="none" stroke-width="1"/>
<polygon points="847.00,624.30 847.00,629.10 851.00,626.70" fill="#ff0000" />
<polygon points="855.00,624.60 855.00,628.80 851.00,626.70" fill="#e8e8e8" />
<polygon points="866.70,624.50 866.70,628.90 870.50,626.70 874.30,628.90 874.30,624.50 870.50,626.70" fill="#ff0000" />
<line x1="870.50" y1="626.70" x2="870.50" y2="622.90" stroke="#ff0000" stroke-width="1" />
<line x1="868.30" y1="622.50" x2="872.70" y2="622.50" stroke="#ff0000" stroke-width="1" />
<polygon points="894.70,620.50 894.70,632.90 906.70,626.70 918.70,632.90 918.70,620.50 906.70,626.70" fill="#ff0000" />
<line x1="906.50" y1="626.70" x2="906.50" y2="616.70" stroke="#ff0000" stroke-width="1" />
<circle cx="906.70" cy="616.70" r="2.80" fill="#ff0000" stroke="none" stroke-width="1"/>
<polygon points="939.00,627.30 946.00,621.30 946.00,633.30" fill="#9a9a9a" />
<line x1="948.50" y1="621.30" x2="948.50" y2="633.30" stroke="#9a9a9a" stroke-width="1" />
<line x1="950.50" y1="621.30" x2="950.50" y2="633.30" stroke="#9a9a9a" stroke-width="1" />
<polygon points="500.00,498.90 500.00,503.70 504.00,501.30" fill="#ff0000" />
<polygon points="508.00,499.20 508.00,503.40 504.00,501.30" fill="#e8e8e8" />
<polygon points="513.20,499.10 513.20,503.50 517.00,501.30 520.80,503.50 520.80,499.10 517.00,501.30" fill="#ff0000" />
<line x1="517.50" y1="501.30" x2="517.50" y2="497.50" stroke="#ff0000" stroke-width="1" />
<line x1="514.80" y1="497.50" x2="519.20" y2="497.50" stroke="#ff0000" stroke-width="1" />
<polygon points="500.00,567.10 500.00,571.90 504.00,569.50" fill="#ff0000" />
<polygon points="508.00,567.40 508.00,571.60 504.00,569.50" fill="#e8e8e8" />
<polygon points="513.20,567.30 513.20,571.70 517.00,569.50 520.80,571.70 520.80,567.30 517.00,569.50" fill="#ff0000" />
<line x1="517.50" y1="569.50" x2="517.50" y2="565.70" stroke="#ff0000" stroke-width="1" />
<line x1="514.80" y1="565.50" x2="519.20" y2="565.50" stroke="#ff0000" stroke-width="1" />
<polygon points="688.50,498.90 688.50,503.70 692.50,501.30" fill="#ff0000" />
<polygon points="696.50,499.20 696.50,503.40 692.50,501.30" fill="#e8e8e8" />
<polygon points="709.90,499.10 709.90,503.50 713.70,501.30 717.50,503.50 717.50,499.10 713.70,501.30" fill="#ff0000" />
<line x1="713.50" y1="501.30" x2="713.50" y2="497.50" stroke="#ff0000" stroke-width="1" />
<line x1="711.50" y1="497.50" x2="715.90" y2="497.50" stroke="#ff0000" stroke-width="1" />
<polygon points="688.50,567.10 688.50,571.90 692.50,569.50" fill="#ff0000" />
<polygon points="696.50,567.40 696.50,571.60 692.50,569.50" fill="#e8e8e8" />
<polygon points="709.90,567.30 709.90,571.70 713.70,569.50 717.50,571.70 717.50,567.30 713.70,569.50" fill="#ff0000" />
<line x1="713.50" y1="569.50" x2="713.50" y2="565.70" stroke="#ff0000" stroke-width="1" />
<line x1="711.50" y1="565.50" x2="715.90" y2="565.50" stroke="#ff0000" stroke-width="1" />
<polygon points="746.10,494.70 746.10,507.90 758.30,501.30 770.50,507.90 770.50,494.70 758.30,501.30" fill="#ff0000" />
<polygon points="745.90,494.60 749.70,496.70 749.70,505.90 745.90,508.00" fill="#00ff00" />
<line x1="758.50" y1="501.30" x2="758.50" y2="509.30" stroke="#00ff00" stroke-width="1" />
<polygon points="750.80,512.10 755.30,509.50 765.80,506.90 765.80,507.90 759.80,511.30 757.30,512.30" fill="#00ff00" />
<circle cx="757.50" cy="509.80" r="2.20" fill="#00ff00" stroke="none" stroke-width="1"/>
<rect x="751.30" y="488.30" width="14.00" height="8.80" fill="#cdcdcd" stroke="none" stroke-width="1"/>
<text x="752.00" y="495.39" font-size="7.2" font-weight="400" fill="#e83030" letter-spacing="-0.604" >13%</text>
<polygon points="749.80,562.60 749.80,575.80 762.00,569.20 774.20,575.80 774.20,562.60 762.00,569.20" fill="#ff0000" />
<polygon points="749.60,562.50 753.40,564.60 753.40,573.80 749.60,575.90" fill="#00ff00" />
<line x1="762.50" y1="569.20" x2="762.50" y2="577.20" stroke="#00ff00" stroke-width="1" />
<polygon points="754.50,580.00 759.00,577.40 769.50,574.80 769.50,575.80 763.50,579.20 761.00,580.20" fill="#00ff00" />
<circle cx="761.20" cy="577.70" r="2.20" fill="#00ff00" stroke="none" stroke-width="1"/>
<rect x="755.00" y="556.20" width="14.00" height="8.80" fill="#cdcdcd" stroke="none" stroke-width="1"/>
<text x="755.70" y="563.29" font-size="7.2" font-weight="400" fill="#e83030" letter-spacing="-0.425" >11%</text>
<polygon points="852.80,522.00 865.80,522.00 859.30,534.00 865.80,546.00 852.80,546.00 859.30,534.00" fill="#ff0000" />
<line x1="849.80" y1="534.50" x2="859.30" y2="534.50" stroke="#ff0000" stroke-width="1" />
<circle cx="849.80" cy="534.00" r="2.80" fill="#ff0000" stroke="none" stroke-width="1"/>
<polygon points="876.00,498.90 876.00,503.70 880.00,501.30" fill="#ff0000" />
<polygon points="884.00,499.20 884.00,503.40 880.00,501.30" fill="#e8e8e8" />
<polygon points="876.00,567.10 876.00,571.90 880.00,569.50" fill="#ff0000" />
<polygon points="884.00,567.40 884.00,571.60 880.00,569.50" fill="#e8e8e8" />
<circle cx="940.00" cy="500.00" r="11.00" fill="none" stroke="#00ff00" stroke-width="2"/>
<path d="M940 500 L949.50 500.00 A9.5 9.5 0 0 1 944.75 508.23 Z" fill="#ffc000"/>
<path d="M940 500 L935.25 508.23 A9.5 9.5 0 0 1 930.50 500.00 Z" fill="#ffc000"/>
<path d="M940 500 L935.25 491.77 A9.5 9.5 0 0 1 944.75 491.77 Z" fill="#ffc000"/>
<path d="M940 500 L944.75 508.23 A9.5 9.5 0 0 1 935.25 508.23 Z" fill="#00ff00"/>
<path d="M940 500 L944.75 491.77 A9.5 9.5 0 0 1 949.50 500.00 Z" fill="#00ff00"/>
<circle cx="940.00" cy="568.00" r="11.10" fill="none" stroke="#ff0000" stroke-width="1.8"/>
<polygon points="929.20,568.00 948.40,560.80 948.40,575.20" fill="#ff0000" />
<polygon points="957.50,500.50 964.50,494.50 964.50,506.50" fill="#ffc000" />
<line x1="966.50" y1="494.50" x2="966.50" y2="506.50" stroke="#ffc000" stroke-width="1" />
<line x1="968.50" y1="494.50" x2="968.50" y2="506.50" stroke="#ffc000" stroke-width="1" />
<polygon points="957.50,568.50 964.50,562.50 964.50,574.50" fill="#9a9a9a" />
<line x1="966.50" y1="562.50" x2="966.50" y2="574.50" stroke="#9a9a9a" stroke-width="1" />
<line x1="968.50" y1="562.50" x2="968.50" y2="574.50" stroke="#9a9a9a" stroke-width="1" />
<polygon points="104.00,477.50 117.00,477.50 110.50,489.50 117.00,501.50 104.00,501.50 110.50,489.50" fill="#ff0000" />
<line x1="101.00" y1="489.50" x2="110.50" y2="489.50" stroke="#ff0000" stroke-width="1" />
<circle cx="101.00" cy="489.50" r="2.80" fill="#ff0000" stroke="none" stroke-width="1"/>
<polygon points="104.00,568.00 117.00,568.00 110.50,580.00 117.00,592.00 104.00,592.00 110.50,580.00" fill="#ff0000" />
<line x1="101.00" y1="580.50" x2="110.50" y2="580.50" stroke="#ff0000" stroke-width="1" />
<circle cx="101.00" cy="580.00" r="2.80" fill="#ff0000" stroke="none" stroke-width="1"/>
<polygon points="153.00,477.50 166.00,477.50 159.50,489.50 166.00,501.50 153.00,501.50 159.50,489.50" fill="#ff0000" />
<line x1="150.00" y1="489.50" x2="159.50" y2="489.50" stroke="#ff0000" stroke-width="1" />
<circle cx="150.00" cy="489.50" r="2.80" fill="#ff0000" stroke="none" stroke-width="1"/>
<polygon points="153.00,568.00 166.00,568.00 159.50,580.00 166.00,592.00 153.00,592.00 159.50,580.00" fill="#ff0000" />
<line x1="150.00" y1="580.50" x2="159.50" y2="580.50" stroke="#ff0000" stroke-width="1" />
<circle cx="150.00" cy="580.00" r="2.80" fill="#ff0000" stroke="none" stroke-width="1"/>
<polygon points="216.80,477.50 229.80,477.50 223.30,489.50 229.80,501.50 216.80,501.50 223.30,489.50" fill="#ff0000" />
<line x1="213.80" y1="489.50" x2="223.30" y2="489.50" stroke="#ff0000" stroke-width="1" />
<circle cx="213.80" cy="489.50" r="2.80" fill="#ff0000" stroke="none" stroke-width="1"/>
<polygon points="216.80,568.00 229.80,568.00 223.30,580.00 229.80,592.00 216.80,592.00 223.30,580.00" fill="#ff0000" />
<line x1="213.80" y1="580.50" x2="223.30" y2="580.50" stroke="#ff0000" stroke-width="1" />
<circle cx="213.80" cy="580.00" r="2.80" fill="#ff0000" stroke="none" stroke-width="1"/>
<polygon points="186.00,522.00 199.00,522.00 192.50,534.00 199.00,546.00 186.00,546.00 192.50,534.00" fill="#ff0000" />
<line x1="183.00" y1="534.50" x2="192.50" y2="534.50" stroke="#ff0000" stroke-width="1" />
<circle cx="183.00" cy="534.00" r="2.80" fill="#ff0000" stroke="none" stroke-width="1"/>
<polygon points="108.10,519.70 112.90,519.70 110.50,515.70" fill="#ff0000" />
<polygon points="108.40,511.70 112.60,511.70 110.50,515.70" fill="#e8e8e8" />
<polyline points="110.50,521.30 116.50,534.30 110.50,547.30 104.50,534.30 110.50,521.30" stroke="#9a9a9a" stroke-width="1" fill="none" />
<line x1="110.50" y1="521.30" x2="110.50" y2="547.30" stroke="#9a9a9a" stroke-width="1" />
<polygon points="108.10,550.00 112.90,550.00 110.50,554.00" fill="#ff0000" />
<polygon points="108.40,558.00 112.60,558.00 110.50,554.00" fill="#e8e8e8" />
<polygon points="220.90,519.70 225.70,519.70 223.30,515.70" fill="#ff0000" />
<polygon points="221.20,511.70 225.40,511.70 223.30,515.70" fill="#e8e8e8" />
<polyline points="223.30,521.30 229.30,534.30 223.30,547.30 217.30,534.30 223.30,521.30" stroke="#9a9a9a" stroke-width="1" fill="none" />
<line x1="223.50" y1="521.30" x2="223.50" y2="547.30" stroke="#9a9a9a" stroke-width="1" />
<polygon points="220.90,550.00 225.70,550.00 223.30,554.00" fill="#ff0000" />
<polygon points="221.20,558.00 225.40,558.00 223.30,554.00" fill="#e8e8e8" />
<polygon points="1192.20,476.70 1205.20,476.70 1198.70,488.70 1205.20,500.70 1192.20,500.70 1198.70,488.70" fill="#ff0000" />
<line x1="1189.20" y1="488.50" x2="1198.70" y2="488.50" stroke="#ff0000" stroke-width="1" />
<circle cx="1189.20" cy="488.70" r="2.80" fill="#ff0000" stroke="none" stroke-width="1"/>
<polygon points="1192.20,568.70 1205.20,568.70 1198.70,580.70 1205.20,592.70 1192.20,592.70 1198.70,580.70" fill="#ff0000" />
<line x1="1189.20" y1="580.50" x2="1198.70" y2="580.50" stroke="#ff0000" stroke-width="1" />
<circle cx="1189.20" cy="580.70" r="2.80" fill="#ff0000" stroke="none" stroke-width="1"/>
<polygon points="1256.00,476.70 1269.00,476.70 1262.50,488.70 1269.00,500.70 1256.00,500.70 1262.50,488.70" fill="#ff0000" />
<line x1="1253.00" y1="488.50" x2="1262.50" y2="488.50" stroke="#ff0000" stroke-width="1" />
<circle cx="1253.00" cy="488.70" r="2.80" fill="#ff0000" stroke="none" stroke-width="1"/>
<polygon points="1256.00,568.70 1269.00,568.70 1262.50,580.70 1269.00,592.70 1256.00,592.70 1262.50,580.70" fill="#ff0000" />
<line x1="1253.00" y1="580.50" x2="1262.50" y2="580.50" stroke="#ff0000" stroke-width="1" />
<circle cx="1253.00" cy="580.70" r="2.80" fill="#ff0000" stroke="none" stroke-width="1"/>
<polygon points="1296.80,476.70 1309.80,476.70 1303.30,488.70 1309.80,500.70 1296.80,500.70 1303.30,488.70" fill="#ff0000" />
<line x1="1293.80" y1="488.50" x2="1303.30" y2="488.50" stroke="#ff0000" stroke-width="1" />
<circle cx="1293.80" cy="488.70" r="2.80" fill="#ff0000" stroke="none" stroke-width="1"/>
<polygon points="1296.80,568.70 1309.80,568.70 1303.30,580.70 1309.80,592.70 1296.80,592.70 1303.30,580.70" fill="#ff0000" />
<line x1="1293.80" y1="580.50" x2="1303.30" y2="580.50" stroke="#ff0000" stroke-width="1" />
<circle cx="1293.80" cy="580.70" r="2.80" fill="#ff0000" stroke="none" stroke-width="1"/>
<polygon points="1222.80,522.00 1235.80,522.00 1229.30,534.00 1235.80,546.00 1222.80,546.00 1229.30,534.00" fill="#00ff00" />
<line x1="1219.80" y1="534.50" x2="1229.30" y2="534.50" stroke="#00ff00" stroke-width="1" />
<circle cx="1219.80" cy="534.00" r="2.80" fill="#00ff00" stroke="none" stroke-width="1"/>
<polygon points="1196.30,519.70 1201.10,519.70 1198.70,515.70" fill="#ff0000" />
<polygon points="1196.60,511.70 1200.80,511.70 1198.70,515.70" fill="#e8e8e8" />
<polyline points="1198.70,521.30 1204.70,534.30 1198.70,547.30 1192.70,534.30 1198.70,521.30" stroke="#9a9a9a" stroke-width="1" fill="none" />
<line x1="1198.50" y1="521.30" x2="1198.50" y2="547.30" stroke="#9a9a9a" stroke-width="1" />
<polygon points="1196.30,550.00 1201.10,550.00 1198.70,554.00" fill="#ff0000" />
<polygon points="1196.60,558.00 1200.80,558.00 1198.70,554.00" fill="#e8e8e8" />
<polygon points="1300.90,519.70 1305.70,519.70 1303.30,515.70" fill="#ff0000" />
<polygon points="1301.20,511.70 1305.40,511.70 1303.30,515.70" fill="#e8e8e8" />
<polyline points="1303.30,521.30 1309.30,534.30 1303.30,547.30 1297.30,534.30 1303.30,521.30" stroke="#9a9a9a" stroke-width="1" fill="none" />
<line x1="1303.50" y1="521.30" x2="1303.50" y2="547.30" stroke="#9a9a9a" stroke-width="1" />
<polygon points="1300.90,550.00 1305.70,550.00 1303.30,554.00" fill="#ff0000" />
<polygon points="1301.20,558.00 1305.40,558.00 1303.30,554.00" fill="#e8e8e8" />
<text x="106.00" y="267.30" font-size="3.6" font-weight="700" fill="#8a00cc" letter-spacing="0.000" >NO.1 VOID TK (P)</text>
<text x="104.00" y="339.30" font-size="3.6" font-weight="700" fill="#8a00cc" letter-spacing="0.000" >NO.2 VOID TK (P)</text>
<text x="330.00" y="286.80" font-size="3.6" font-weight="700" fill="#8a00cc" letter-spacing="0.000" >BWV25</text>
<text x="370.00" y="355.80" font-size="3.6" font-weight="700" fill="#8a00cc" letter-spacing="0.000" >BWV23</text>
<text x="382.50" y="373.80" font-size="3.6" font-weight="700" fill="#8a00cc" letter-spacing="0.000" >NO.4</text>
<text x="361.00" y="384.30" font-size="3.6" font-weight="700" fill="#8a00cc" letter-spacing="0.000" >VOID TK (P)</text>
<text x="370.00" y="454.30" font-size="3.6" font-weight="700" fill="#8a00cc" letter-spacing="0.000" >BWV24</text>
<text x="549.00" y="302.30" font-size="3.6" font-weight="700" fill="#8a00cc" letter-spacing="0.000" >TO FIRE MAIN</text>
<text x="559.00" y="318.80" font-size="3.6" font-weight="700" fill="#8a00cc" letter-spacing="0.000" >BLV03</text>
<text x="559.00" y="351.80" font-size="3.6" font-weight="700" fill="#8a00cc" letter-spacing="0.000" >NO.1 BOLGE</text>
<text x="559.00" y="361.30" font-size="3.6" font-weight="700" fill="#8a00cc" letter-spacing="0.000" >FIRE PUMP</text>
<text x="559.00" y="422.80" font-size="3.6" font-weight="700" fill="#8a00cc" letter-spacing="0.000" >BLV01</text>
<text x="776.00" y="283.80" font-size="3.6" font-weight="700" fill="#8a00cc" letter-spacing="0.000" >BWV07</text>
<text x="819.00" y="251.80" font-size="3.6" font-weight="700" fill="#8a00cc" letter-spacing="0.000" >NO.5 VOID TK (P)</text>
<text x="636.00" y="313.80" font-size="3.6" font-weight="700" fill="#8a00cc" letter-spacing="0.000" >BWV20</text>
<text x="774.00" y="309.80" font-size="3.6" font-weight="700" fill="#8a00cc" letter-spacing="0.000" >BWV08</text>
<text x="844.00" y="313.80" font-size="3.6" font-weight="700" fill="#8a00cc" letter-spacing="0.000" >BWV19</text>
<text x="636.00" y="358.80" font-size="3.6" font-weight="700" fill="#8a00cc" letter-spacing="0.000" >NO.2 BALLAST</text>
<text x="664.00" y="369.80" font-size="3.6" font-weight="700" fill="#8a00cc" letter-spacing="0.000" >PUMP</text>
<text x="811.00" y="358.80" font-size="3.6" font-weight="700" fill="#8a00cc" letter-spacing="0.000" >NO.1 BALLAST</text>
<text x="812.50" y="370.80" font-size="3.6" font-weight="700" fill="#8a00cc" letter-spacing="0.000" >PUMP</text>
<text x="634.00" y="393.80" font-size="3.6" font-weight="700" fill="#8a00cc" letter-spacing="0.000" >BWV10</text>
<text x="909.00" y="384.80" font-size="3.6" font-weight="700" fill="#8a00cc" letter-spacing="0.000" >BWV09</text>
<text x="632.00" y="430.80" font-size="3.6" font-weight="700" fill="#8a00cc" letter-spacing="0.000" >BWV16</text>
<text x="723.00" y="430.80" font-size="3.6" font-weight="700" fill="#8a00cc" letter-spacing="0.000" >BWV13</text>
<text x="801.00" y="430.80" font-size="3.6" font-weight="700" fill="#8a00cc" letter-spacing="0.000" >BWV15</text>
<text x="897.50" y="422.80" font-size="3.6" font-weight="700" fill="#8a00cc" letter-spacing="0.000" >BWV01</text>
<text x="919.00" y="406.80" font-size="3.6" font-weight="700" fill="#8a00cc" letter-spacing="0.000" >PUMP</text>
<text x="917.50" y="412.80" font-size="3.6" font-weight="700" fill="#8a00cc" letter-spacing="0.000" >TK (P)</text>
<text x="944.50" y="433.80" font-size="3.6" font-weight="700" fill="#8a00cc" letter-spacing="0.000" >SEA</text>
<text x="944.50" y="443.80" font-size="3.6" font-weight="700" fill="#8a00cc" letter-spacing="0.000" >CHEST</text>
<text x="946.00" y="453.30" font-size="3.6" font-weight="700" fill="#8a00cc" letter-spacing="0.000" >(P)</text>
<text x="1071.00" y="269.80" font-size="3.6" font-weight="700" fill="#8a00cc" letter-spacing="0.000" >NO.6</text>
<text x="1053.00" y="278.80" font-size="3.6" font-weight="700" fill="#8a00cc" letter-spacing="0.000" >VOID TK (P)</text>
<text x="1137.50" y="283.80" font-size="3.6" font-weight="700" fill="#8a00cc" letter-spacing="0.000" >BWV27</text>
<text x="1000.00" y="356.80" font-size="3.6" font-weight="700" fill="#8a00cc" letter-spacing="0.000" >BWV39</text>
<text x="1002.00" y="376.80" font-size="3.6" font-weight="700" fill="#8a00cc" letter-spacing="0.000" >NO.7</text>
<text x="983.00" y="385.80" font-size="3.6" font-weight="700" fill="#8a00cc" letter-spacing="0.000" >VOID TK (P)</text>
<text x="1000.00" y="411.80" font-size="3.6" font-weight="700" fill="#8a00cc" letter-spacing="0.000" >BWV40</text>
<text x="1243.00" y="344.80" font-size="3.6" font-weight="700" fill="#8a00cc" letter-spacing="0.000" >NO.9 VOID TK (P)</text>
<text x="114.50" y="513.80" font-size="3.6" font-weight="700" fill="#8a00cc" letter-spacing="0.000" >BWV31</text>
<text x="147.50" y="515.80" font-size="3.6" font-weight="700" fill="#8a00cc" letter-spacing="0.000" >BWV33</text>
<text x="227.50" y="514.80" font-size="3.6" font-weight="700" fill="#8a00cc" letter-spacing="0.000" >BWV32</text>
<text x="134.00" y="534.80" font-size="3.6" font-weight="700" fill="#8a00cc" letter-spacing="0.000" >NO.8</text>
<text x="212.50" y="535.80" font-size="3.6" font-weight="700" fill="#8a00cc" letter-spacing="0.000" >BWV26</text>
<text x="115.50" y="544.80" font-size="3.6" font-weight="700" fill="#8a00cc" letter-spacing="0.000" >VOID TK (C)</text>
<text x="114.00" y="559.80" font-size="3.6" font-weight="700" fill="#8a00cc" letter-spacing="0.000" >BWV35</text>
<text x="148.00" y="555.80" font-size="3.6" font-weight="700" fill="#8a00cc" letter-spacing="0.000" >BWV34</text>
<text x="226.00" y="558.80" font-size="3.6" font-weight="700" fill="#8a00cc" letter-spacing="0.000" >BWV36</text>
<text x="782.50" y="512.80" font-size="3.6" font-weight="700" fill="#8a00cc" letter-spacing="0.000" >9WV01</text>
<text x="786.00" y="579.80" font-size="3.6" font-weight="700" fill="#8a00cc" letter-spacing="0.000" >9WV02</text>
<text x="863.00" y="557.80" font-size="3.6" font-weight="700" fill="#8a00cc" letter-spacing="0.000" >9WV03</text>
<text x="965.00" y="486.80" font-size="3.6" font-weight="700" fill="#8a00cc" letter-spacing="0.000" >NO.1 SUBMERSIBLE</text>
<text x="970.00" y="497.80" font-size="3.6" font-weight="700" fill="#8a00cc" letter-spacing="0.000" >PUMP</text>
<text x="965.00" y="554.80" font-size="3.6" font-weight="700" fill="#8a00cc" letter-spacing="0.000" >NO.2 SUBMERSIBLE</text>
<text x="970.00" y="566.30" font-size="3.6" font-weight="700" fill="#8a00cc" letter-spacing="0.000" >PUMP</text>
<text x="559.00" y="652.80" font-size="3.6" font-weight="700" fill="#8a00cc" letter-spacing="0.000" >BLV02</text>
<text x="630.00" y="642.80" font-size="3.6" font-weight="700" fill="#8a00cc" letter-spacing="0.000" >BWV18</text>
<text x="721.00" y="639.80" font-size="3.6" font-weight="700" fill="#8a00cc" letter-spacing="0.000" >BWV14</text>
<text x="801.00" y="642.80" font-size="3.6" font-weight="700" fill="#8a00cc" letter-spacing="0.000" >BWV17</text>
<text x="896.00" y="649.80" font-size="3.6" font-weight="700" fill="#8a00cc" letter-spacing="0.000" >BWV02</text>
<text x="631.00" y="673.80" font-size="3.6" font-weight="700" fill="#8a00cc" letter-spacing="0.000" >BWV12</text>
<text x="636.00" y="684.80" font-size="3.6" font-weight="700" fill="#8a00cc" letter-spacing="0.000" >NO.4 BALLAST</text>
<text x="665.00" y="695.80" font-size="3.6" font-weight="700" fill="#8a00cc" letter-spacing="0.000" >PUMP</text>
<text x="813.00" y="683.80" font-size="3.6" font-weight="700" fill="#8a00cc" letter-spacing="0.000" >NO.3 BALLAST</text>
<text x="813.00" y="693.80" font-size="3.6" font-weight="700" fill="#8a00cc" letter-spacing="0.000" >PUMP</text>
<text x="913.00" y="677.80" font-size="3.6" font-weight="700" fill="#8a00cc" letter-spacing="0.000" >BWV11</text>
<text x="557.00" y="711.80" font-size="3.6" font-weight="700" fill="#8a00cc" letter-spacing="0.000" >NO.2 BOLGE</text>
<text x="558.00" y="720.80" font-size="3.6" font-weight="700" fill="#8a00cc" letter-spacing="0.000" >FIRE PUMP</text>
<text x="675.00" y="744.80" font-size="3.6" font-weight="700" fill="#8a00cc" letter-spacing="0.000" >BWV22</text>
<text x="813.00" y="742.80" font-size="3.6" font-weight="700" fill="#8a00cc" letter-spacing="0.000" >BWV21</text>
<text x="773.00" y="759.80" font-size="3.6" font-weight="700" fill="#8a00cc" letter-spacing="0.000" >BWV06</text>
<text x="557.00" y="749.80" font-size="3.6" font-weight="700" fill="#8a00cc" letter-spacing="0.000" >BLV04</text>
<text x="550.00" y="768.80" font-size="3.6" font-weight="700" fill="#8a00cc" letter-spacing="0.000" >TO FIRE MAIN</text>
<text x="915.00" y="754.80" font-size="3.6" font-weight="700" fill="#8a00cc" letter-spacing="0.000" >PUMP</text>
<text x="914.00" y="762.80" font-size="3.6" font-weight="700" fill="#8a00cc" letter-spacing="0.000" >TK (S)</text>
<text x="805.00" y="816.80" font-size="3.6" font-weight="700" fill="#8a00cc" letter-spacing="0.000" >BWV05</text>
<text x="845.00" y="819.80" font-size="3.6" font-weight="700" fill="#8a00cc" letter-spacing="0.000" >NO.5 VOID TK (S)</text>
<text x="944.50" y="612.80" font-size="3.6" font-weight="700" fill="#8a00cc" letter-spacing="0.000" >SEA</text>
<text x="944.50" y="622.80" font-size="3.6" font-weight="700" fill="#8a00cc" letter-spacing="0.000" >CHEST</text>
<text x="950.00" y="632.80" font-size="3.6" font-weight="700" fill="#8a00cc" letter-spacing="0.000" >(S)</text>
<text x="1002.00" y="656.80" font-size="3.6" font-weight="700" fill="#8a00cc" letter-spacing="0.000" >BWV41</text>
<text x="1002.00" y="686.80" font-size="3.6" font-weight="700" fill="#8a00cc" letter-spacing="0.000" >NO.7</text>
<text x="984.00" y="697.80" font-size="3.6" font-weight="700" fill="#8a00cc" letter-spacing="0.000" >VOID TK (S)</text>
<text x="1002.00" y="766.80" font-size="3.6" font-weight="700" fill="#8a00cc" letter-spacing="0.000" >BWV42</text>
<text x="1072.00" y="788.80" font-size="3.6" font-weight="700" fill="#8a00cc" letter-spacing="0.000" >NO.6</text>
<text x="1053.00" y="797.80" font-size="3.6" font-weight="700" fill="#8a00cc" letter-spacing="0.000" >VOID TK (S)</text>
<text x="1137.00" y="797.80" font-size="3.6" font-weight="700" fill="#8a00cc" letter-spacing="0.000" >BWV28</text>
<text x="1244.00" y="727.80" font-size="3.6" font-weight="700" fill="#8a00cc" letter-spacing="0.000" >NO.9 VOID TK (S)</text>
<text x="1204.00" y="513.80" font-size="3.6" font-weight="700" fill="#8a00cc" letter-spacing="0.000" >BWV45</text>
<text x="1253.00" y="514.80" font-size="3.6" font-weight="700" fill="#8a00cc" letter-spacing="0.000" >BWV29</text>
<text x="1307.50" y="511.80" font-size="3.6" font-weight="700" fill="#8a00cc" letter-spacing="0.000" >BWV46</text>
<text x="1250.00" y="537.80" font-size="3.6" font-weight="700" fill="#8a00cc" letter-spacing="0.000" >BWV04</text>
<text x="1255.00" y="554.80" font-size="3.6" font-weight="700" fill="#8a00cc" letter-spacing="0.000" >BWV30</text>
<text x="1203.00" y="560.80" font-size="3.6" font-weight="700" fill="#8a00cc" letter-spacing="0.000" >BWV43</text>
<text x="1307.50" y="558.80" font-size="3.6" font-weight="700" fill="#8a00cc" letter-spacing="0.000" >BWV44</text>
<text x="370.00" y="669.80" font-size="3.6" font-weight="700" fill="#8a00cc" letter-spacing="0.000" >BWV37</text>
<text x="380.00" y="690.80" font-size="3.6" font-weight="700" fill="#8a00cc" letter-spacing="0.000" >BACKUP</text>
<text x="378.00" y="701.80" font-size="3.6" font-weight="700" fill="#8a00cc" letter-spacing="0.000" >STORAGE</text>
<text x="371.00" y="762.80" font-size="3.6" font-weight="700" fill="#8a00cc" letter-spacing="0.000" >BWV38</text>
<text x="326.00" y="801.80" font-size="3.6" font-weight="700" fill="#8a00cc" letter-spacing="0.000" >BWV38</text>
<text x="104.00" y="737.80" font-size="3.6" font-weight="700" fill="#8a00cc" letter-spacing="0.000" >NO.2 VOID TK (S)</text>
<text x="104.00" y="807.80" font-size="3.6" font-weight="700" fill="#8a00cc" letter-spacing="0.000" >NO.1 VOID TK (S)</text>
<text x="720.00" y="349.88" font-size="6.6" font-weight="400" fill="#ff0000" letter-spacing="0.442"  class="dv">Error</text>
<text x="763.70" y="349.88" font-size="6.6" font-weight="400" fill="#ff0000" letter-spacing="0.442"  class="dv">Error</text>
<text x="720.00" y="389.88" font-size="6.6" font-weight="400" fill="#ff0000" letter-spacing="0.442"  class="dv">Error</text>
<text x="763.70" y="389.88" font-size="6.6" font-weight="400" fill="#ff0000" letter-spacing="0.442"  class="dv">Error</text>
<polyline points="795.5,90 795.5,158.5 1268,158.5" fill="none" stroke="#00ff00" stroke-width="1.2"/>
<polygon points="795.5,85.5 789.5,97 801.5,97" fill="#00ff00"/><polygon points="1278,158.5 1266.5,152.5 1266.5,164.5" fill="#00ff00"/>
<circle cx="1827.6" cy="122.9" r="37.4" fill="#fff"/><circle cx="1827.6" cy="122.9" r="36.1" fill="none" stroke="#ff0000" stroke-width="0.8"/><circle cx="1827.6" cy="122.9" r="25.5" fill="#ff0000"/>
<rect x="11" y="61" width="167.3" height="12.3" rx="1.5" fill="#6d6e70"/>
<rect x="38.5" y="70" width="5.7" height="20" fill="#6d6e70"/>
<rect x="5.7" y="163" width="182.6" height="3.3" rx="0.5" fill="#6d6e70"/>
<clipPath id="lc"><rect x="0" y="80" width="33.2" height="75"/><rect x="38.5" y="80" width="5.7" height="75"/><rect x="48" y="80" width="144" height="75"/></clipPath>
<g clip-path="url(#lc)"><text transform="translate(0,150.4) scale(1,3.136)" x="12.2 31.9 46.8 71.6 97.3 121.8 132 156.7" y="0" font-size="31" font-weight="700" fill="#6d6e70" stroke="#6d6e70" stroke-width="1.3" vector-effect="non-scaling-stroke" stroke-linejoin="round">XTRONICA</text></g>
<line x1="2" y1="30" x2="2" y2="52" stroke="#c9c6c1" stroke-width="1.8" stroke-dasharray="3 3.2"/>
<line x1="41" y1="30" x2="41" y2="52" stroke="#c9c6c1" stroke-width="1.8" stroke-dasharray="3 3.2"/>
<line x1="80" y1="30" x2="80" y2="52" stroke="#c9c6c1" stroke-width="1.8" stroke-dasharray="3 3.2"/>
<line x1="146" y1="30" x2="146" y2="52" stroke="#c9c6c1" stroke-width="1.8" stroke-dasharray="3 3.2"/>
<line x1="239" y1="30" x2="239" y2="52" stroke="#c9c6c1" stroke-width="1.8" stroke-dasharray="3 3.2"/>
<line x1="305" y1="30" x2="305" y2="52" stroke="#c9c6c1" stroke-width="1.8" stroke-dasharray="3 3.2"/>
<rect x="87" y="27" width="26" height="26" rx="4" fill="#d5d3cf"/>
<path d="M25.8 42.2 a4.6 4.6 0 1 1 -3.2 -6.6" fill="none" stroke="#2f6fd0" stroke-width="2.4"/><polygon points="20.5,31.5 26.5,35.3 20.8,38.8" fill="#2f6fd0"/>
<circle cx="59.6" cy="35.6" r="3.5" fill="#d9a67c"/><path d="M58 32.6 q2 -1.6 4.4 0 l0.3 1.6 q-2.4 -1.2 -5 0 z" fill="#6b6b6b"/><path d="M53.3 47 q0 -7 6.3 -7 q6.3 0 6.3 7 z" fill="#2e8fe6"/><path d="M58.4 40.2 l1.2 3.4 l1.2 -3.4 z" fill="#e9f3fb"/><circle cx="67" cy="41.8" r="2.1" fill="none" stroke="#f2b21c" stroke-width="1.5"/><line x1="65.3" y1="43.4" x2="61.6" y2="47" stroke="#f2b21c" stroke-width="1.5"/>
<rect x="93.3" y="34.3" width="13.4" height="10.2" fill="#23272b" stroke="#8f8f8f" stroke-width="1"/><rect x="92.8" y="33.8" width="14.4" height="11.2" fill="none" stroke="#e8e8e8" stroke-width="0.5"/><polyline points="95,40 97.5,40 98.5,37 100,42.3 101.3,38.8 102.5,40 105,40" fill="none" stroke="#35d6a4" stroke-width="0.9"/>
<rect x="120.3" y="34.3" width="13.4" height="10.2" fill="#23272b" stroke="#f0f0f0" stroke-width="1.1"/><polyline points="122,40 124.5,40 125.5,37 127,42.3 128.3,38.8 129.5,40 132,40" fill="none" stroke="#35d6a4" stroke-width="0.9"/><rect x="128.3" y="43.6" width="6.2" height="2.3" rx="0.6" fill="#e01b24"/>
<circle cx="165.4" cy="39.4" r="6.2" fill="none" stroke="#0a0a0a" stroke-width="2.3"/><line x1="170" y1="44" x2="173.2" y2="47" stroke="#0a0a0a" stroke-width="3" stroke-linecap="round"/>
<line x1="162.6" y1="39.4" x2="168.2" y2="39.4" stroke="#0a0a0a" stroke-width="1.7"/>
<line x1="165.4" y1="36.6" x2="165.4" y2="42.2" stroke="#0a0a0a" stroke-width="1.7"/>
<circle cx="192.2" cy="39.4" r="6.2" fill="none" stroke="#0a0a0a" stroke-width="2.3"/><line x1="196.8" y1="44" x2="200" y2="47" stroke="#0a0a0a" stroke-width="3" stroke-linecap="round"/>
<line x1="189.4" y1="39.4" x2="195" y2="39.4" stroke="#0a0a0a" stroke-width="1.7"/>
<g fill="#0a0a0a"><polygon points="214,34 218.5,34 214,38.5"/><polygon points="226,34 221.5,34 226,38.5"/><polygon points="214,46 218.5,46 214,41.5"/><polygon points="226,46 221.5,46 226,41.5"/></g><g stroke="#0a0a0a" stroke-width="0.9"><line x1="215" y1="35" x2="225" y2="45"/><line x1="225" y1="35" x2="215" y2="45"/></g><circle cx="220" cy="40" r="3.2" fill="#595753"/>
<rect x="252" y="32.5" width="10.5" height="11" fill="#2f78c8"/><rect x="255" y="36" width="11" height="11.5" fill="#1f5aa8"/><circle cx="260.5" cy="40.3" r="2.4" fill="#0e2a55"/><path d="M256.3 47.5 q0 -4.6 4.2 -4.6 q4.2 0 4.2 4.6 z" fill="#0e2a55"/>
<circle cx="282" cy="37" r="3.4" fill="none" stroke="#aaa8a4" stroke-width="2"/><rect x="285" y="36" width="7.5" height="2.2" fill="#9a9894"/><rect x="278" y="42.8" width="15.7" height="4.6" fill="#efd319"/><rect x="281" y="44.6" width="9" height="0.9" fill="#b89c10"/>
<path d="M321 33.5 l7 -1.6 v16.2 l-7 -1.6 z" fill="#8fd6f4" stroke="#16406e" stroke-width="0.9"/><path d="M328 32.5 l3.6 1.4 v11.2 l-3.6 1.4 z" fill="#3a9ad9" stroke="#16406e" stroke-width="0.8"/><line x1="316.5" y1="40" x2="324" y2="40" stroke="#1a1a1a" stroke-width="1.5" stroke-dasharray="1.6 0.9"/><polygon points="324,38 326.5,40 324,42" fill="#1a1a1a"/>
<polygon points="4.8,190.6 11.9,183 19,190.6" fill="#f0664f"/><polygon points="6.6,190.3 11.9,185.4 17.2,190.3 17.2,197 6.6,197" fill="#fbe37a"/><rect x="10.4" y="191.6" width="3" height="5.4" fill="#e5532d"/>
<rect x="75.5" y="190" width="18" height="5" fill="#3f93ad"/><rect x="73.3" y="188.7" width="3" height="7.6" rx="0.8" fill="#3f93ad"/><rect x="92.6" y="188.7" width="3" height="7.6" rx="0.8" fill="#3f93ad"/><rect x="81.3" y="188" width="6.4" height="9" rx="2" fill="#3f93ad"/><rect x="83.6" y="184.6" width="1.8" height="4" fill="#3f93ad"/><rect x="79.8" y="182.8" width="9.4" height="2" fill="#e01b24"/>
<rect x="231.3" y="184.6" width="11" height="10.8" fill="#eef6fe" stroke="#c9b88f" stroke-width="0.8"/><rect x="230.8" y="184" width="12" height="2.4" fill="#5b97dc"/>
<rect x="350.3" y="184.6" width="11" height="10.8" fill="#eef6fe" stroke="#c9b88f" stroke-width="0.8"/><rect x="349.8" y="184" width="12" height="2.4" fill="#5b97dc"/>
<rect x="448.3" y="184.6" width="11" height="10.8" fill="#eef6fe" stroke="#c9b88f" stroke-width="0.8"/><rect x="447.8" y="184" width="12" height="2.4" fill="#5b97dc"/>
<rect x="557.3" y="184.6" width="11" height="10.8" fill="#eef6fe" stroke="#c9b88f" stroke-width="0.8"/><rect x="556.8" y="184" width="12" height="2.4" fill="#5b97dc"/>
<circle cx="680" cy="190" r="6.2" fill="#8f8d89"/><circle cx="680" cy="190" r="3.4" fill="none" stroke="#e2e0dc" stroke-width="1.3"/><circle cx="680" cy="190" r="1" fill="#e2e0dc"/>
</svg>
<div class="b" style="left:1398px;top:203px;width:19px;height:60px;background:#ffff00;"></div>
<span class="t" style="left:1398px;top:263px;width:60px;height:19px;line-height:19px;font-size:16px;font-weight:400;color:#1a1a3a;transform-origin:0 0;transform:rotate(-90deg);text-align:center;text-indent:1.5px;">Search</span>
</body></html>
